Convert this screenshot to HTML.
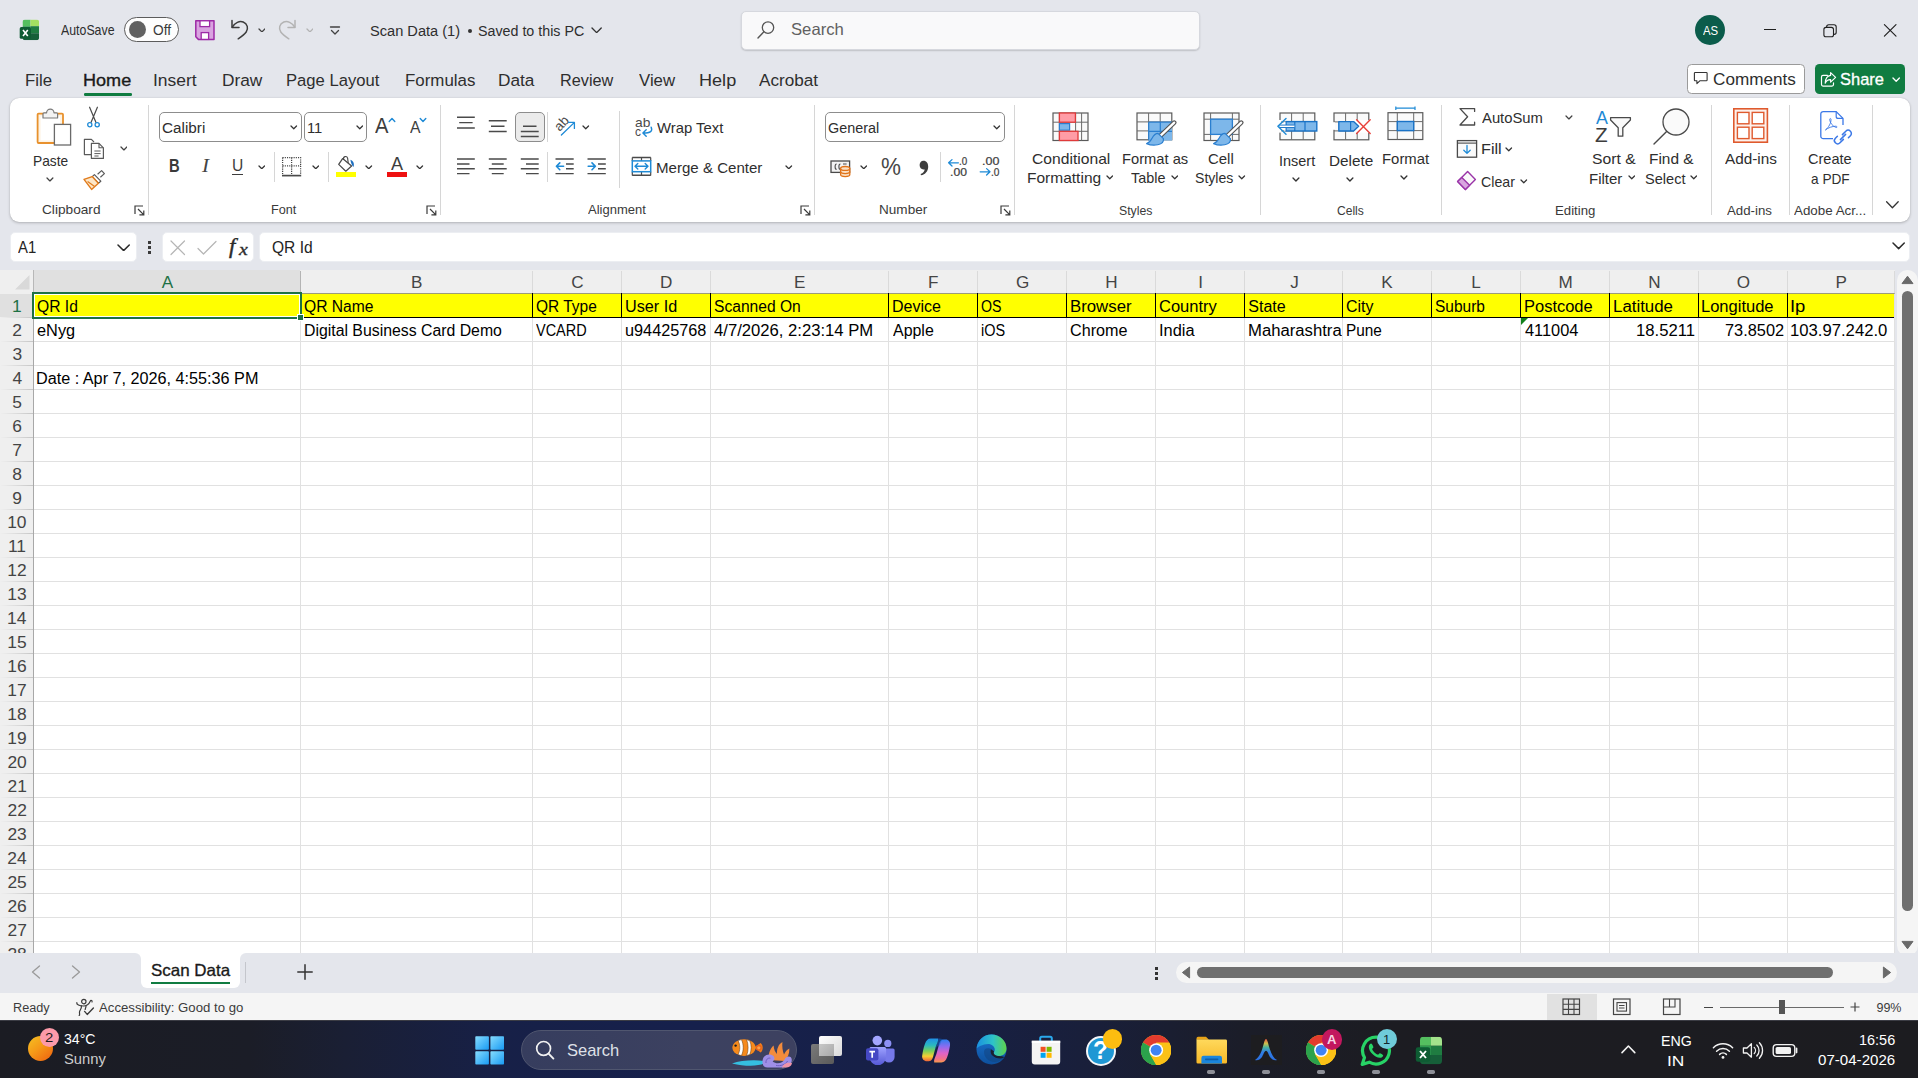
<!DOCTYPE html>
<html><head><meta charset="utf-8"><title>Scan Data (1) - Excel</title>
<style>
html,body{margin:0;padding:0;}
body{width:1918px;height:1078px;overflow:hidden;position:relative;background:#e4e6ec;font-family:"Liberation Sans",sans-serif;}
.b{position:absolute;display:block;box-sizing:border-box;}
.t{position:absolute;display:block;white-space:pre;transform-origin:0 50%;font-family:"Liberation Sans",sans-serif;}
</style></head><body>
<!-- s_title -->
<svg class="b" style="left:19px;top:19px;" width="21" height="22" viewBox="0 0 21 22">
<defs><clipPath id="xlc"><rect x="3.5" y=".6" width="16.6" height="20.6" rx="2.6"/></clipPath></defs>
<g clip-path="url(#xlc)">
<rect x="3.5" y=".6" width="8" height="6.6" fill="#55bf60"/>
<rect x="11.5" y=".6" width="8.6" height="6.6" fill="#a4df62"/>
<rect x="3.5" y="7.2" width="8" height="7" fill="#2f9b50"/>
<rect x="11.5" y="7.2" width="8.6" height="7" fill="#1f7c41"/>
<rect x="3.5" y="14.2" width="16.6" height="7" fill="#165f39"/>
</g>
<rect x=".7" y="8.1" width="11.3" height="11.7" rx="1.6" fill="#0e5c33"/>
<path d="M4 11 L8.8 17 M8.8 11 L4 17" stroke="#fff" stroke-width="1.6"/>
</svg>
<span class="t" style="left:61.00px;top:21.49px;font-size:14.5px;line-height:19px;color:#2e2e2e;transform:scaleX(0.8510);">AutoSave</span>
<div class="b" style="left:123.8px;top:17px;width:55px;height:24.8px;border:1.3px solid #5c5c5c;border-radius:13px;background:#fdfdfd;"></div>
<div class="b" style="left:128.6px;top:21px;width:17.2px;height:17.2px;border-radius:50%;background:#616161;"></div>
<span class="t" style="left:152.88px;top:21.95px;font-size:13.8px;line-height:18px;color:#3a3a3a;transform:scaleX(0.9946);">Off</span>
<svg class="b" style="left:194px;top:19px;" width="22" height="22" viewBox="0 0 22 22">
<path d="M1.8 1.8 H20 V20.4 H4.4 L1.8 17.8Z" fill="#d9a3e0" stroke="#9d2aa6" stroke-width="1.5" stroke-linejoin="round"/>
<rect x="6" y="1.8" width="9.6" height="5.8" fill="#fff" stroke="#9d2aa6" stroke-width="1.3"/>
<rect x="7.2" y="13.6" width="7.4" height="6.8" fill="#fff" stroke="#9d2aa6" stroke-width="1.3"/>
</svg>
<svg class="b" style="left:229px;top:17px;" width="22" height="24" viewBox="0 0 22 24">
<path d="M3 3.5 V10.5 H10" fill="none" stroke="#3b3b3b" stroke-width="1.5" stroke-linecap="round" stroke-linejoin="round"/>
<path d="M3.3 10.2 C6 5.5 10.5 3.6 14.2 5 C18.6 6.7 19.6 11.6 17.2 15 C15.6 17.3 12.6 19.6 9.2 21.8" fill="none" stroke="#3b3b3b" stroke-width="1.5" stroke-linecap="round"/>
</svg>
<svg class="b" style="left:257.56px;top:27.53px;" width="7.88" height="4.94" viewBox="0 0 7.88 4.94"><path d="M1 1 L3.94 3.94 L6.88 1" fill="none" stroke="#424242" stroke-width="1.261" stroke-linecap="round" stroke-linejoin="round"/></svg>
<svg class="b" style="left:276px;top:17px;" width="22" height="24" viewBox="0 0 22 24">
<path d="M19 3.5 V10.5 H12" fill="none" stroke="#b3b3b3" stroke-width="1.5" stroke-linecap="round" stroke-linejoin="round"/>
<path d="M18.7 10.2 C16 5.5 11.5 3.6 7.8 5 C3.4 6.7 2.4 11.6 4.8 15 C6.4 17.3 9.4 19.6 12.8 21.8" fill="none" stroke="#b3b3b3" stroke-width="1.5" stroke-linecap="round"/>
</svg>
<svg class="b" style="left:305.56px;top:27.53px;" width="7.88" height="4.94" viewBox="0 0 7.88 4.94"><path d="M1 1 L3.94 3.94 L6.88 1" fill="none" stroke="#b3b3b3" stroke-width="1.261" stroke-linecap="round" stroke-linejoin="round"/></svg>
<svg class="b" style="left:329px;top:25px;" width="13" height="12" viewBox="0 0 13 12">
<path d="M1.5 2 H10.5" stroke="#424242" stroke-width="1.3" stroke-linecap="round"/>
<path d="M2.5 5.5 L6 9 L9.5 5.5" fill="none" stroke="#424242" stroke-width="1.3" stroke-linecap="round" stroke-linejoin="round"/>
</svg>
<span class="t" style="left:370.34px;top:20.83px;font-size:15.5px;line-height:20px;color:#2e2e2e;transform:scaleX(0.9422);">Scan Data (1)</span>
<div class="b" style="left:467.5px;top:29px;width:4px;height:4px;border-radius:50%;background:#333;"></div>
<span class="t" style="left:478.36px;top:20.83px;font-size:15.5px;line-height:20px;color:#2e2e2e;transform:scaleX(0.9198);">Saved to this PC</span>
<svg class="b" style="left:590.88px;top:26.69px;" width="11.24" height="6.62" viewBox="0 0 11.24 6.62"><path d="M1 1 L5.62 5.62 L10.24 1" fill="none" stroke="#333" stroke-width="1.358" stroke-linecap="round" stroke-linejoin="round"/></svg>
<div class="b" style="left:740.5px;top:11px;width:459px;height:39px;background:#f9f9fa;border:1px solid #d6d8de;border-radius:5px;box-shadow:0 1px 1.5px rgba(0,0,0,.16);"></div>
<svg class="b" style="left:756px;top:20px;" width="20" height="20" viewBox="0 0 20 20">
<circle cx="12" cy="7.6" r="5.7" fill="none" stroke="#555" stroke-width="1.3"/>
<path d="M7.9 11.8 L2 18" stroke="#555" stroke-width="1.4" stroke-linecap="round"/>
</svg>
<span class="t" style="left:791.25px;top:19.18px;font-size:16.5px;line-height:21px;color:#606060;transform:scaleX(1.0101);">Search</span>
<div class="b" style="left:1695px;top:15px;width:30px;height:30px;border-radius:50%;background:#0b5c4b;"></div>
<span class="t" style="left:1702.60px;top:22.07px;font-size:13px;line-height:17px;color:#fff;transform:scaleX(0.8740);">AS</span>
<div class="b" style="left:1764px;top:29.2px;width:12.2px;height:1.15px;background:#1f1f1f;"></div>
<svg class="b" style="left:1822px;top:22.5px;" width="16" height="16" viewBox="0 0 16 16">
<rect x="1.9" y="4.4" width="9.6" height="9.4" rx="2.1" fill="none" stroke="#1f1f1f" stroke-width="1.1"/>
<path d="M4.6 4.2 V4 a2.2 2.2 0 0 1 2.2 -2.2 H12 a2.2 2.2 0 0 1 2.2 2.2 V9.2 a2.2 2.2 0 0 1 -2.2 2.2 H11.7" fill="none" stroke="#1f1f1f" stroke-width="1.1"/>
</svg>
<svg class="b" style="left:1882px;top:22px;" width="17" height="17" viewBox="0 0 17 17"><path d="M2.4 2.6 L14 14.2 M14 2.6 L2.4 14.2" stroke="#1f1f1f" stroke-width="1.15" stroke-linecap="round"/></svg>
<span class="t" style="left:24.66px;top:68.99px;font-size:17.4px;line-height:23px;color:#2e2e2e;transform:scaleX(0.9643);">File</span>
<span class="t" style="left:153.43px;top:68.99px;font-size:17.4px;line-height:23px;color:#2e2e2e;transform:scaleX(1.0037);">Insert</span>
<span class="t" style="left:221.62px;top:68.99px;font-size:17.4px;line-height:23px;color:#2e2e2e;transform:scaleX(0.9940);">Draw</span>
<span class="t" style="left:285.67px;top:68.99px;font-size:17.4px;line-height:23px;color:#2e2e2e;transform:scaleX(0.9561);">Page Layout</span>
<span class="t" style="left:404.65px;top:68.99px;font-size:17.4px;line-height:23px;color:#2e2e2e;transform:scaleX(0.9708);">Formulas</span>
<span class="t" style="left:497.62px;top:68.99px;font-size:17.4px;line-height:23px;color:#2e2e2e;transform:scaleX(0.9909);">Data</span>
<span class="t" style="left:559.70px;top:68.99px;font-size:17.4px;line-height:23px;color:#2e2e2e;transform:scaleX(0.9339);">Review</span>
<span class="t" style="left:638.92px;top:68.99px;font-size:17.4px;line-height:23px;color:#2e2e2e;transform:scaleX(0.9646);">View</span>
<span class="t" style="left:698.55px;top:68.99px;font-size:17.4px;line-height:23px;color:#2e2e2e;transform:scaleX(1.0395);">Help</span>
<span class="t" style="left:759.00px;top:68.99px;font-size:17.4px;line-height:23px;color:#2e2e2e;transform:scaleX(0.9857);">Acrobat</span>
<span class="t" style="left:83.05px;top:68.99px;font-size:17.4px;line-height:23px;color:#1a1a1a;-webkit-text-stroke:0.35px #1a1a1a;transform:scaleX(1.0388);">Home</span>
<div class="b" style="left:84px;top:93px;width:48px;height:2.6px;background:#107c41;border-radius:1.3px;"></div>
<div class="b" style="left:1687px;top:64px;width:117.5px;height:30px;background:#fff;border:1px solid #9a9a9a;border-radius:4.5px;"></div>
<svg class="b" style="left:1693px;top:70px;" width="16" height="16" viewBox="0 0 16 16">
<path d="M2.2 2.5 H13.3 a.8 .8 0 0 1 .8 .8 V10 a.8 .8 0 0 1 -.8 .8 H6.8 L3.9 13.6 V10.8 H2.2 a.8 .8 0 0 1 -.8 -.8 V3.3 a.8 .8 0 0 1 .8 -.8Z" fill="none" stroke="#333" stroke-width="1.1" stroke-linejoin="round"/>
</svg>
<span class="t" style="left:1713.14px;top:68.78px;font-size:16.8px;line-height:22px;color:#2e2e2e;transform:scaleX(1.0213);">Comments</span>
<div class="b" style="left:1815px;top:64px;width:90px;height:30px;background:#107c41;border-radius:4.5px;"></div>
<svg class="b" style="left:1820px;top:69.5px;" width="18" height="18" viewBox="0 0 18 18">
<path d="M7.4 5.4 H3 a1.5 1.5 0 0 0 -1.5 1.5 V14.6 a1.5 1.5 0 0 0 1.5 1.5 H12 a1.5 1.5 0 0 0 1.5 -1.5 V12.8" fill="none" stroke="#fff" stroke-width="1.2" stroke-linecap="round"/>
<path d="M10.6 2.6 L15.6 7.4 L10.6 12.2 V9.6 C8 9.5 6.3 10.8 5.2 13.2 C5.4 8.8 7.4 5.8 10.6 5.4Z" fill="none" stroke="#fff" stroke-width="1.15" stroke-linejoin="round"/>
</svg>
<span class="t" style="left:1840.26px;top:67.92px;font-size:17.2px;line-height:22px;color:#fff;-webkit-text-stroke:0.34px #fff;transform:scaleX(0.9577);">Share</span>
<svg class="b" style="left:1891.81px;top:76.904px;" width="8.384" height="5.192" viewBox="0 0 8.384 5.192"><path d="M1 1 L4.192 4.192 L7.384 1" fill="none" stroke="#fff" stroke-width="1.358" stroke-linecap="round" stroke-linejoin="round"/></svg>
<!-- s_ribbon -->
<div class="b" style="left:10px;top:98px;width:1899.5px;height:123.5px;background:#fff;border-radius:9px;box-shadow:0 1px 3px rgba(0,0,0,.22),0 0 1px rgba(0,0,0,.18);"></div>
<div class="b" style="left:147.5px;top:104.5px;width:1px;height:110px;background:#d6d6d6;"></div>
<div class="b" style="left:439.8px;top:104.5px;width:1px;height:110px;background:#d6d6d6;"></div>
<div class="b" style="left:813.7px;top:104.5px;width:1px;height:110px;background:#d6d6d6;"></div>
<div class="b" style="left:1014px;top:104.5px;width:1px;height:110px;background:#d6d6d6;"></div>
<div class="b" style="left:1260px;top:104.5px;width:1px;height:110px;background:#d6d6d6;"></div>
<div class="b" style="left:1440.8px;top:104.5px;width:1px;height:110px;background:#d6d6d6;"></div>
<div class="b" style="left:1710.8px;top:104.5px;width:1px;height:110px;background:#d6d6d6;"></div>
<div class="b" style="left:1789px;top:104.5px;width:1px;height:110px;background:#d6d6d6;"></div>
<div class="b" style="left:1872px;top:104.5px;width:1px;height:110px;background:#d6d6d6;"></div>
<div class="b" style="left:273.5px;top:152px;width:1px;height:30px;background:#d6d6d6;"></div>
<div class="b" style="left:328px;top:152px;width:1px;height:30px;background:#d6d6d6;"></div>
<div class="b" style="left:547px;top:112px;width:1px;height:29.5px;background:#d6d6d6;"></div>
<div class="b" style="left:547px;top:152px;width:1px;height:30px;background:#d6d6d6;"></div>
<div class="b" style="left:619px;top:111px;width:1px;height:77px;background:#d6d6d6;"></div>
<div class="b" style="left:939.5px;top:152px;width:1px;height:30px;background:#d6d6d6;"></div>
<span class="t" style="left:41.62px;top:200.68px;font-size:13.6px;line-height:18px;color:#3a3a3a;transform:scaleX(1.0051);">Clipboard</span>
<span class="t" style="left:270.68px;top:200.68px;font-size:13.6px;line-height:18px;color:#3a3a3a;transform:scaleX(0.9330);">Font</span>
<span class="t" style="left:588.00px;top:200.68px;font-size:13.6px;line-height:18px;color:#3a3a3a;transform:scaleX(0.9572);">Alignment</span>
<span class="t" style="left:879.21px;top:200.68px;font-size:13.6px;line-height:18px;color:#3a3a3a;transform:scaleX(0.9974);">Number</span>
<span class="t" style="left:1119.45px;top:201.68px;font-size:13.6px;line-height:18px;color:#3a3a3a;transform:scaleX(0.9035);">Styles</span>
<span class="t" style="left:1336.90px;top:201.68px;font-size:13.6px;line-height:18px;color:#3a3a3a;transform:scaleX(0.8865);">Cells</span>
<span class="t" style="left:1555.44px;top:201.68px;font-size:13.6px;line-height:18px;color:#3a3a3a;transform:scaleX(0.9711);">Editing</span>
<span class="t" style="left:1727.00px;top:201.98px;font-size:13.6px;line-height:18px;color:#3a3a3a;transform:scaleX(0.9753);">Add-ins</span>
<span class="t" style="left:1794.00px;top:201.98px;font-size:13.6px;line-height:18px;color:#3a3a3a;transform:scaleX(0.9841);">Adobe Acr...</span>
<svg class="b" style="left:133.5px;top:204.5px;" width="11" height="11" viewBox="0 0 11 11">
<path d="M1 9 V1 H9" fill="none" stroke="#3a3a3a" stroke-width="1.2"/>
<path d="M4 4 L9.6 9.6 M9.8 5.4 V9.8 H5.4" fill="none" stroke="#3a3a3a" stroke-width="1.2"/>
</svg>
<svg class="b" style="left:425.5px;top:204.5px;" width="11" height="11" viewBox="0 0 11 11">
<path d="M1 9 V1 H9" fill="none" stroke="#3a3a3a" stroke-width="1.2"/>
<path d="M4 4 L9.6 9.6 M9.8 5.4 V9.8 H5.4" fill="none" stroke="#3a3a3a" stroke-width="1.2"/>
</svg>
<svg class="b" style="left:799.5px;top:204.5px;" width="11" height="11" viewBox="0 0 11 11">
<path d="M1 9 V1 H9" fill="none" stroke="#3a3a3a" stroke-width="1.2"/>
<path d="M4 4 L9.6 9.6 M9.8 5.4 V9.8 H5.4" fill="none" stroke="#3a3a3a" stroke-width="1.2"/>
</svg>
<svg class="b" style="left:1000px;top:204.5px;" width="11" height="11" viewBox="0 0 11 11">
<path d="M1 9 V1 H9" fill="none" stroke="#3a3a3a" stroke-width="1.2"/>
<path d="M4 4 L9.6 9.6 M9.8 5.4 V9.8 H5.4" fill="none" stroke="#3a3a3a" stroke-width="1.2"/>
</svg>
<svg class="b" style="left:1884.5px;top:200px;" width="15" height="10" viewBox="0 0 15 10"><path d="M1.6 1.8 L7.4 7.8 L13.2 1.8" fill="none" stroke="#333" stroke-width="1.3" stroke-linecap="round" stroke-linejoin="round"/></svg>
<svg class="b" style="left:35px;top:106px;" width="38" height="41" viewBox="0 0 38 41">
<rect x="2.6" y="7.6" width="25.4" height="29.4" rx="1" fill="#fdf3e4" stroke="#e8912d" stroke-width="1.8"/>
<rect x="5.6" y="10.4" width="19.4" height="24" fill="#fff"/>
<path d="M8 12 V7.8 a1 1 0 0 1 1 -1 H11.6 a3.7 3.7 0 0 1 7.4 0 H21.6 a1 1 0 0 1 1 1 V12Z" fill="#f3f3f3" stroke="#7a7a7a" stroke-width="1.2" stroke-linejoin="round"/>
<rect x="19.4" y="18.4" width="16.2" height="20.6" fill="#fff" stroke="#6a6a6a" stroke-width="1.3"/>
</svg>
<span class="t" style="left:33.40px;top:152.02px;font-size:14.6px;line-height:19px;color:#2e2e2e;transform:scaleX(0.9423);">Paste</span>
<svg class="b" style="left:46.06px;top:176.83px;" width="7.88" height="4.94" viewBox="0 0 7.88 4.94"><path d="M1 1 L3.94 3.94 L6.88 1" fill="none" stroke="#424242" stroke-width="1.261" stroke-linecap="round" stroke-linejoin="round"/></svg>
<svg class="b" style="left:85px;top:105px;" width="17" height="24" viewBox="0 0 17 24">
<path d="M4.6 2.2 L11 17.6 M12.4 2.2 L6 17.6" stroke="#4a4a4a" stroke-width="1.2" stroke-linecap="round"/>
<circle cx="4.8" cy="19.8" r="2.1" fill="#fff" stroke="#1e8ad6" stroke-width="1.3"/>
<circle cx="12.2" cy="19.8" r="2.1" fill="#fff" stroke="#1e8ad6" stroke-width="1.3"/>
</svg>
<svg class="b" style="left:82px;top:137px;" width="24" height="23" viewBox="0 0 24 23">
<path d="M9 17.6 H2.4 V2.4 H9.4 L12 5" fill="none" stroke="#5a5a5a" stroke-width="1.2" stroke-linejoin="round"/>
<path d="M9.4 6.4 H17 L21.4 10.8 V21.4 H9.4Z" fill="#fff" stroke="#5a5a5a" stroke-width="1.2" stroke-linejoin="round"/>
<path d="M17 6.4 V10.8 H21.4" fill="none" stroke="#5a5a5a" stroke-width="1.1"/>
<path d="M12.4 14 H18.6 M12.4 16.6 H18.6 M12.4 19 H16.6" stroke="#5a5a5a" stroke-width="1"/>
</svg>
<svg class="b" style="left:119.56px;top:146.23px;" width="7.88" height="4.94" viewBox="0 0 7.88 4.94"><path d="M1 1 L3.94 3.94 L6.88 1" fill="none" stroke="#424242" stroke-width="1.261" stroke-linecap="round" stroke-linejoin="round"/></svg>
<svg class="b" style="left:82px;top:169px;" width="24" height="22" viewBox="0 0 24 22">
<path d="M15.6 5.2 L19.6 1.6 L22.4 4.6 L18.4 8.2" fill="#fff" stroke="#5a5a5a" stroke-width="1.2" stroke-linejoin="round"/>
<path d="M12.4 5.6 L18.8 12.2 L16.4 14.2 L10.2 7.6Z" fill="#fff" stroke="#5a5a5a" stroke-width="1.2" stroke-linejoin="round"/>
<path d="M10.2 7.6 L16.4 14.2 L9.6 20.4 L2 10.4Z" fill="#fde7c8" stroke="#e07b1c" stroke-width="1.4" stroke-linejoin="round"/>
<path d="M5.6 12.6 L12.6 17.4" stroke="#e07b1c" stroke-width="1.2"/>
</svg>
<div class="b" style="left:159px;top:112px;width:143px;height:30px;background:#fff;border:1px solid #8d8d8d;border-radius:5px;"></div>
<span class="t" style="left:161.74px;top:117.73px;font-size:15.2px;line-height:20px;color:#2e2e2e;transform:scaleX(1.0056);">Calibri</span>
<svg class="b" style="left:290.028px;top:124.914px;" width="7.544" height="4.772" viewBox="0 0 7.544 4.772"><path d="M1 1 L3.772 3.772 L6.544 1" fill="none" stroke="#333" stroke-width="1.261" stroke-linecap="round" stroke-linejoin="round"/></svg>
<div class="b" style="left:304px;top:112px;width:63px;height:30px;background:#fff;border:1px solid #8d8d8d;border-radius:5px;"></div>
<span class="t" style="left:306.89px;top:117.73px;font-size:15.2px;line-height:20px;color:#2e2e2e;transform:scaleX(0.9707);">11</span>
<svg class="b" style="left:355.728px;top:124.914px;" width="7.544" height="4.772" viewBox="0 0 7.544 4.772"><path d="M1 1 L3.772 3.772 L6.544 1" fill="none" stroke="#333" stroke-width="1.261" stroke-linecap="round" stroke-linejoin="round"/></svg>
<span class="t" style="left:375.30px;top:111.56px;font-size:21.4px;line-height:28px;color:#3d3d3d;transform:scaleX(0.9416);">A</span>
<svg class="b" style="left:387.5px;top:117.3px;" width="8" height="6" viewBox="0 0 8 6"><path d="M1.2 4.4 L4 1.4 L6.8 4.4" fill="none" stroke="#1e8ad6" stroke-width="1.4" stroke-linecap="round" stroke-linejoin="round"/></svg>
<span class="t" style="left:409.50px;top:116.58px;font-size:16.8px;line-height:22px;color:#3d3d3d;transform:scaleX(0.9398);">A</span>
<svg class="b" style="left:418.7px;top:117.3px;" width="8" height="6" viewBox="0 0 8 6"><path d="M1.2 1.4 L4 4.4 L6.8 1.4" fill="none" stroke="#1e8ad6" stroke-width="1.4" stroke-linecap="round" stroke-linejoin="round"/></svg>
<span class="t" style="left:168.84px;top:154.82px;font-size:17.8px;line-height:23px;color:#3a3a3a;font-weight:700;transform:scaleX(0.8313);">B</span>
<span class="t" style="left:202.01px;top:153.83px;font-size:18.4px;line-height:24px;color:#444;font-family:'Liberation Serif',serif;font-style:italic;transform:scaleX(1.1442);">I</span>
<span class="t" style="left:231.63px;top:155.24px;font-size:16.4px;line-height:21px;color:#3d3d3d;transform:scaleX(0.9521);">U</span>
<div class="b" style="left:232px;top:173.9px;width:11px;height:1.3px;background:#3d3d3d;"></div>
<svg class="b" style="left:257.728px;top:164.614px;" width="7.544" height="4.772" viewBox="0 0 7.544 4.772"><path d="M1 1 L3.772 3.772 L6.544 1" fill="none" stroke="#333" stroke-width="1.261" stroke-linecap="round" stroke-linejoin="round"/></svg>
<svg class="b" style="left:281px;top:156px;" width="22" height="22" viewBox="0 0 22 22">
<path d="M1.6 1.6 H19.6 V18 M1.6 1.6 V18 M10.6 1.6 V18 M1.6 9.8 H19.6" fill="none" stroke="#444" stroke-width="1.25" stroke-dasharray="1.1 1.1"/>
<path d="M1 19.6 H20.2" stroke="#4a4a4a" stroke-width="1.7"/>
</svg>
<svg class="b" style="left:311.728px;top:164.614px;" width="7.544" height="4.772" viewBox="0 0 7.544 4.772"><path d="M1 1 L3.772 3.772 L6.544 1" fill="none" stroke="#333" stroke-width="1.261" stroke-linecap="round" stroke-linejoin="round"/></svg>
<svg class="b" style="left:336px;top:155px;" width="21" height="17.5" viewBox="0 0 21 17.5">
<path d="M6.6 3.6 L15.6 11 L9.8 16.2 L2.7 9.4Z" fill="#fff" stroke="#4a4a4a" stroke-width="1.25" stroke-linejoin="round"/>
<path d="M7.6 4.4 C6.8 1.4 10.8 .4 11.6 3.2 L12.2 7.8" fill="none" stroke="#4a4a4a" stroke-width="1.15" stroke-linecap="round"/>
<path d="M14.4 4.8 C17.6 6 18.6 9.4 17.4 12 C16 10.6 14.8 8 14.4 4.8Z" fill="#1e6fc0"/>
</svg>
<div class="b" style="left:335.8px;top:172px;width:20px;height:4.8px;background:#ffff00;"></div>
<svg class="b" style="left:365.228px;top:164.614px;" width="7.544" height="4.772" viewBox="0 0 7.544 4.772"><path d="M1 1 L3.772 3.772 L6.544 1" fill="none" stroke="#333" stroke-width="1.261" stroke-linecap="round" stroke-linejoin="round"/></svg>
<span class="t" style="left:390.80px;top:153.05px;font-size:17.6px;line-height:23px;color:#3d3d3d;transform:scaleX(1.0253);">A</span>
<div class="b" style="left:386.8px;top:172px;width:20.2px;height:4.8px;background:#ee1111;"></div>
<svg class="b" style="left:416.228px;top:164.614px;" width="7.544" height="4.772" viewBox="0 0 7.544 4.772"><path d="M1 1 L3.772 3.772 L6.544 1" fill="none" stroke="#333" stroke-width="1.261" stroke-linecap="round" stroke-linejoin="round"/></svg>
<div class="b" style="left:515px;top:112px;width:29.5px;height:29.7px;background:#ebebeb;border:1px solid #8d8d8d;border-radius:5px;"></div>
<svg class="b" style="left:450px;top:100px;" width="170" height="90" viewBox="0 0 170 90"><path d="M7 17.3 H24.8 M9.2 22.6 H22.6 M7 28 H24.8 " stroke="#4a4a4a" stroke-width="1.45" fill="none"/><path d="M38.8 20.8 H56.7 M41 26.2 H54.5 M38.8 31.4 H56.7 " stroke="#4a4a4a" stroke-width="1.45" fill="none"/><path d="M73 26.2 H86.5 M70.8 31.4 H88.7 M70.8 36.4 H88.7 " stroke="#4a4a4a" stroke-width="1.45" fill="none"/><path d="M7 59 H24.8 M7 63.9 H19.5 M7 68.7 H24.8 M7 73.6 H19.5 " stroke="#4a4a4a" stroke-width="1.45" fill="none"/><path d="M38.8 59 H56.7 M41.8 63.9 H53.7 M38.8 68.7 H56.7 M41.8 73.6 H53.7 " stroke="#4a4a4a" stroke-width="1.45" fill="none"/><path d="M70.8 59 H88.7 M76 63.9 H88.7 M70.8 68.7 H88.7 M76 73.6 H88.7 " stroke="#4a4a4a" stroke-width="1.45" fill="none"/><path d="M105.5 59 H123.7 M116 63.9 H123.7 M116 68.7 H123.7 M105.5 73.6 H123.7 " stroke="#4a4a4a" stroke-width="1.45" fill="none"/><path d="M113.6 66.3 H106.6 M109.8 62.9 L106.4 66.3 L109.8 69.7" fill="none" stroke="#1e8ad6" stroke-width="1.6" stroke-linecap="round" stroke-linejoin="round"/><path d="M137.5 59 H155.8 M148 63.9 H155.8 M148 68.7 H155.8 M137.5 73.6 H155.8 " stroke="#4a4a4a" stroke-width="1.45" fill="none"/><path d="M138.2 66.3 H145.2 M142 62.9 L145.4 66.3 L142 69.7" fill="none" stroke="#1e8ad6" stroke-width="1.6" stroke-linecap="round" stroke-linejoin="round"/></svg>
<span class="t" style="left:553.6px;top:116px;font-size:13.4px;line-height:15px;color:#4a4a4a;transform:rotate(-47deg);transform-origin:50% 50%;">ab</span>
<svg class="b" style="left:559px;top:120px;" width="18" height="17" viewBox="0 0 18 17"><path d="M2.4 15 L15.2 2.6 M9.4 2.4 H15.4 V8.4" fill="none" stroke="#1e8ad6" stroke-width="1.3" stroke-linecap="round" stroke-linejoin="round"/></svg>
<svg class="b" style="left:582.228px;top:124.914px;" width="7.544" height="4.772" viewBox="0 0 7.544 4.772"><path d="M1 1 L3.772 3.772 L6.544 1" fill="none" stroke="#333" stroke-width="1.261" stroke-linecap="round" stroke-linejoin="round"/></svg>
<span class="t" style="left:634.65px;top:113.60px;font-size:12.8px;line-height:17px;color:#4a4a4a;transform:scaleX(1.0771);">ab</span>
<span class="t" style="left:634.72px;top:123.20px;font-size:12.8px;line-height:17px;color:#4a4a4a;transform:scaleX(0.9339);">c</span>
<svg class="b" style="left:641px;top:126px;" width="13" height="12" viewBox="0 0 13 12"><path d="M10.2 1.2 C11.8 5.2 9.6 7 2.2 7 M5.2 3.8 L1.9 7 L5.2 10.2" fill="none" stroke="#1e8ad6" stroke-width="1.45" stroke-linecap="round" stroke-linejoin="round"/></svg>
<span class="t" style="left:657.43px;top:118.52px;font-size:14.6px;line-height:19px;color:#2e2e2e;transform:scaleX(1.0189);">Wrap Text</span>
<svg class="b" style="left:631px;top:156px;" width="21" height="21" viewBox="0 0 21 21">
<path d="M1.2 1.5 H19.8 M1.2 19.3 H19.8" stroke="#4a4a4a" stroke-width="1.5"/>
<path d="M1.3 1.4 V5 M10.5 1.4 V5 M19.7 1.4 V5 M1.3 15.8 V19.4 M10.5 15.8 V19.4 M19.7 15.8 V19.4" stroke="#4a4a4a" stroke-width="1.2"/>
<rect x="1.3" y="4.9" width="18.4" height="10.8" fill="#fff" stroke="#1e8ad6" stroke-width="1.5"/>
<path d="M4.2 10.3 H16.8 M6.8 7.6 L4 10.3 L6.8 13 M14.2 7.6 L17 10.3 L14.2 13" fill="none" stroke="#1e8ad6" stroke-width="1.4" stroke-linecap="round" stroke-linejoin="round"/>
</svg>
<span class="t" style="left:656.29px;top:158.52px;font-size:14.6px;line-height:19px;color:#2e2e2e;transform:scaleX(1.0326);">Merge &amp; Center</span>
<svg class="b" style="left:785.228px;top:164.614px;" width="7.544" height="4.772" viewBox="0 0 7.544 4.772"><path d="M1 1 L3.772 3.772 L6.544 1" fill="none" stroke="#333" stroke-width="1.261" stroke-linecap="round" stroke-linejoin="round"/></svg>
<div class="b" style="left:825px;top:112px;width:180px;height:30px;background:#fff;border:1px solid #8d8d8d;border-radius:5px;"></div>
<span class="t" style="left:827.78px;top:117.73px;font-size:15.2px;line-height:20px;color:#2e2e2e;transform:scaleX(0.9467);">General</span>
<svg class="b" style="left:993.228px;top:124.914px;" width="7.544" height="4.772" viewBox="0 0 7.544 4.772"><path d="M1 1 L3.772 3.772 L6.544 1" fill="none" stroke="#333" stroke-width="1.261" stroke-linecap="round" stroke-linejoin="round"/></svg>
<svg class="b" style="left:829.6px;top:159.7px;" width="23" height="18" viewBox="0 0 23 18">
<rect x="1" y="1" width="18.6" height="11.4" fill="#f3f3f3" stroke="#4a4a4a" stroke-width="1.3"/>
<path d="M6.6 4 C4.6 4 4.6 9.4 6.6 9.4 M10.4 4 C8.4 4 8.4 9.4 10.4 9.4 M13 4 H16.6" fill="none" stroke="#4a4a4a" stroke-width="1.1"/>
<g transform="translate(-.8,-.2)"><path d="M11.4 8.6 V14.8 C11.4 17.6 20.6 17.6 20.6 14.8 V8.6" fill="#fbe0c4" stroke="#e0731a" stroke-width="1.3"/>
<ellipse cx="16" cy="8.6" rx="4.6" ry="1.9" fill="#fbe0c4" stroke="#e0731a" stroke-width="1.3"/>
<path d="M11.4 11.8 C11.4 14.4 20.6 14.4 20.6 11.8" fill="none" stroke="#e0731a" stroke-width="1.2"/></g>
</svg>
<svg class="b" style="left:859.528px;top:164.614px;" width="7.544" height="4.772" viewBox="0 0 7.544 4.772"><path d="M1 1 L3.772 3.772 L6.544 1" fill="none" stroke="#333" stroke-width="1.261" stroke-linecap="round" stroke-linejoin="round"/></svg>
<span class="t" style="left:881.11px;top:151.91px;font-size:23px;line-height:30px;color:#484848;transform:scaleX(0.9756);">%</span>
<svg class="b" style="left:917.9px;top:158.6px;" width="12" height="18.4" viewBox="0 0 12 18.4"><path transform="scale(1,1.09)" d="M5.4 1.6 C8.6 1.6 10.2 4 10.2 7 C10.2 11 7.4 14 3 15 L2.6 13.8 C5.2 13 6.6 11.2 6.6 9.4 C6.4 9.5 5.9 9.6 5.4 9.6 C3.2 9.6 1.6 8 1.6 5.6 C1.6 3.4 3.2 1.6 5.4 1.6Z" fill="#3d3d3d"/></svg>
<svg class="b" style="left:947px;top:156px;" width="21" height="21" viewBox="0 0 21 21"><path d="M11.4 6.8 H1.6 M5 3.6 L1.6 6.8 L5 10" fill="none" stroke="#1e8ad6" stroke-width="1.3" stroke-linecap="round" stroke-linejoin="round"/></svg>
<span class="t" style="left:958.81px;top:154.15px;font-size:11.2px;line-height:15px;color:#3d3d3d;-webkit-text-stroke:0.22px #3d3d3d;transform:scaleX(0.8803);">.0</span>
<span class="t" style="left:950.20px;top:164.65px;font-size:11.2px;line-height:15px;color:#3d3d3d;-webkit-text-stroke:0.22px #3d3d3d;transform:scaleX(1.0870);">.00</span>
<span class="t" style="left:981.88px;top:154.15px;font-size:11.2px;line-height:15px;color:#3d3d3d;-webkit-text-stroke:0.22px #3d3d3d;transform:scaleX(1.1152);">.00</span>
<svg class="b" style="left:979px;top:164.5px;" width="13" height="13" viewBox="0 0 13 13"><path d="M1.2 6.8 H11 M7.6 3.6 L11 6.8 L7.6 10" fill="none" stroke="#1e8ad6" stroke-width="1.3" stroke-linecap="round" stroke-linejoin="round"/></svg>
<span class="t" style="left:990.69px;top:164.65px;font-size:11.2px;line-height:15px;color:#3d3d3d;-webkit-text-stroke:0.22px #3d3d3d;transform:scaleX(0.9054);">.0</span>
<svg class="b" style="left:1052.3px;top:111.6px;" width="37" height="30" viewBox="0 0 37 30"><rect x="1" y="1" width="35" height="27.5" fill="#fafafa" stroke="#5a5a5a" stroke-width="1.2"/><path d="M7.4 1 V28.5 M23.6 1 V28.5 M29.6 1 V28.5 M1 10.2 H36 M1 19.3 H36 " stroke="#6a6a6a" stroke-width="1" fill="none"/>
<rect x="7.4" y="1" width="16" height="9.2" fill="#ff9ca6" stroke="#e03a3a" stroke-width="1.3"/>
<rect x="7.4" y="11.6" width="10.2" height="6.6" fill="#7db7ea" stroke="#2a7fd0" stroke-width="1.2"/>
<rect x="7.4" y="19.3" width="18.6" height="9.2" fill="#ff9ca6" stroke="#e03a3a" stroke-width="1.3"/>
</svg>
<span class="t" style="left:1032.22px;top:149.72px;font-size:14.6px;line-height:19px;color:#2e2e2e;transform:scaleX(1.0726);">Conditional</span>
<span class="t" style="left:1027.06px;top:169.32px;font-size:14.6px;line-height:19px;color:#2e2e2e;transform:scaleX(1.0628);">Formatting</span>
<svg class="b" style="left:1105.93px;top:175.214px;" width="7.544" height="4.772" viewBox="0 0 7.544 4.772"><path d="M1 1 L3.772 3.772 L6.544 1" fill="none" stroke="#333" stroke-width="1.261" stroke-linecap="round" stroke-linejoin="round"/></svg>
<svg class="b" style="left:1136px;top:111.6px;" width="41" height="36" viewBox="0 0 41 36"><rect x="1" y="1" width="34.8" height="26.8" fill="#fafafa" stroke="#5a5a5a" stroke-width="1.2"/><path d="M12.6 1 V27.8 M24.2 1 V27.8 M1 9.9 H35.8 M1 18.9 H35.8 " stroke="#6a6a6a" stroke-width="1" fill="none"/>
<rect x="12.7" y="10.2" width="23.3" height="18.3" fill="#7db7ea"/>
<path d="M24.3 10.2 V28.5 M12.7 19.3 H36 M12.7 10.2 H36 M12.7 10.2 V28.5" stroke="#2a7fd0" stroke-width="1.2" fill="none"/>

<path d="M38.2 10.6 L24.6 23.6" stroke="#555" stroke-width="4.6" stroke-linecap="round"/>
<path d="M38.2 10.6 L24.6 23.6" stroke="#fff" stroke-width="2.3" stroke-linecap="round"/>
<path d="M22 21.4 C15.4 21.6 17 29.6 10.6 31.6 C17 34.6 28.4 33.4 27.4 26.6Z" fill="#7db7ea" stroke="#2a7fd0" stroke-width="1.2" stroke-linejoin="round"/>
</svg>
<span class="t" style="left:1122.12px;top:149.72px;font-size:14.6px;line-height:19px;color:#2e2e2e;transform:scaleX(1.0075);">Format as</span>
<span class="t" style="left:1131.41px;top:169.32px;font-size:14.6px;line-height:19px;color:#2e2e2e;transform:scaleX(0.9877);">Table</span>
<svg class="b" style="left:1170.73px;top:175.214px;" width="7.544" height="4.772" viewBox="0 0 7.544 4.772"><path d="M1 1 L3.772 3.772 L6.544 1" fill="none" stroke="#333" stroke-width="1.261" stroke-linecap="round" stroke-linejoin="round"/></svg>
<svg class="b" style="left:1203px;top:111.6px;" width="41" height="36" viewBox="0 0 41 36"><rect x="1" y="1" width="35" height="27.5" fill="#fafafa" stroke="#5a5a5a" stroke-width="1.2"/><path d="M7.6 1 V28.5 M29.4 1 V28.5 M1 7.2 H36 M1 22.4 H36 " stroke="#6a6a6a" stroke-width="1" fill="none"/>
<rect x="7.6" y="7.2" width="21.8" height="15.2" fill="#7db7ea" stroke="#2a7fd0" stroke-width="1.3"/>

<path d="M38.2 10.6 L24.6 23.6" stroke="#555" stroke-width="4.6" stroke-linecap="round"/>
<path d="M38.2 10.6 L24.6 23.6" stroke="#fff" stroke-width="2.3" stroke-linecap="round"/>
<path d="M22 21.4 C15.4 21.6 17 29.6 10.6 31.6 C17 34.6 28.4 33.4 27.4 26.6Z" fill="#7db7ea" stroke="#2a7fd0" stroke-width="1.2" stroke-linejoin="round"/>
</svg>
<span class="t" style="left:1208.05px;top:149.72px;font-size:14.6px;line-height:19px;color:#2e2e2e;transform:scaleX(1.0242);">Cell</span>
<span class="t" style="left:1195.37px;top:169.32px;font-size:14.6px;line-height:19px;color:#2e2e2e;transform:scaleX(0.9659);">Styles</span>
<svg class="b" style="left:1238.23px;top:175.214px;" width="7.544" height="4.772" viewBox="0 0 7.544 4.772"><path d="M1 1 L3.772 3.772 L6.544 1" fill="none" stroke="#333" stroke-width="1.261" stroke-linecap="round" stroke-linejoin="round"/></svg>
<svg class="b" style="left:1277px;top:111.6px;" width="42" height="30" viewBox="0 0 42 30"><g transform="translate(2,0)"><rect x="1" y="1" width="34.8" height="26.8" fill="#fafafa" stroke="#5a5a5a" stroke-width="1.2"/><path d="M12.6 1 V27.8 M24.2 1 V27.8 M1 9.9 H35.8 M1 18.9 H35.8 " stroke="#6a6a6a" stroke-width="1" fill="none"/></g>
<rect x="1" y="8" width="3.2" height="12.6" fill="#fff"/>
<rect x="9" y="9.6" width="30.8" height="9.4" fill="#7db7ea" stroke="#1a73c7" stroke-width="1.4"/>
<path d="M17.8 9.6 V19 M28 9.6 V19" stroke="#1a73c7" stroke-width="1.2"/>
<path d="M8.4 9.4 L1.2 14.3 L8.4 19.2 Z" fill="#fff"/>
<path d="M17 14.3 H2.4" stroke="#1a73c7" stroke-width="3.4"/>
<path d="M17.4 14.3 H2.6" stroke="#fff" stroke-width="1.5"/>
<path d="M9 6.4 L.9 14.3 L9 22.2" fill="none" stroke="#1e8ad6" stroke-width="1.4" stroke-linecap="round" stroke-linejoin="round"/>
</svg>
<span class="t" style="left:1279.00px;top:151.82px;font-size:14.6px;line-height:19px;color:#2e2e2e;transform:scaleX(0.9911);">Insert</span>
<svg class="b" style="left:1292.36px;top:176.83px;" width="7.88" height="4.94" viewBox="0 0 7.88 4.94"><path d="M1 1 L3.94 3.94 L6.88 1" fill="none" stroke="#333" stroke-width="1.358" stroke-linecap="round" stroke-linejoin="round"/></svg>
<svg class="b" style="left:1332.6px;top:111.6px;" width="40" height="30" viewBox="0 0 40 30"><rect x="1" y="1" width="34.8" height="26.8" fill="#fafafa" stroke="#5a5a5a" stroke-width="1.2"/><path d="M12.6 1 V27.8 M24.2 1 V27.8 M1 9.9 H35.8 M1 18.9 H35.8 " stroke="#6a6a6a" stroke-width="1" fill="none"/>
<rect x="0" y="10.2" width="2" height="7.6" fill="#fff"/>
<rect x="21" y="8.2" width="17" height="12.4" fill="#fff"/>
<path d="M5.8 9.6 H20.6 L25.6 14.3 L20.6 19 H5.8Z" fill="#7db7ea" stroke="#1a73c7" stroke-width="1.4" stroke-linejoin="round"/>
<path d="M17.6 9.6 V19" stroke="#1a73c7" stroke-width="1.2"/>
<path d="M23.6 7.8 L37.2 21.4 M37.2 7.8 L23.6 21.4" stroke="#e8403a" stroke-width="1.4" stroke-linecap="round"/>
</svg>
<span class="t" style="left:1329.08px;top:151.82px;font-size:14.6px;line-height:19px;color:#2e2e2e;transform:scaleX(1.0484);">Delete</span>
<svg class="b" style="left:1346.06px;top:176.83px;" width="7.88" height="4.94" viewBox="0 0 7.88 4.94"><path d="M1 1 L3.94 3.94 L6.88 1" fill="none" stroke="#333" stroke-width="1.358" stroke-linecap="round" stroke-linejoin="round"/></svg>
<svg class="b" style="left:1386.7px;top:105.9px;" width="38" height="36" viewBox="0 0 38 36"><g transform="translate(0,5.7)"><rect x="1" y="1" width="34.8" height="26.8" fill="#fafafa" stroke="#5a5a5a" stroke-width="1.2"/><path d="M10.3 1 V27.8 M26.7 1 V27.8 M1 9.9 H35.8 M1 18.9 H35.8 " stroke="#6a6a6a" stroke-width="1" fill="none"/>
<rect x="10.3" y="9.8" width="16.4" height="9.1" fill="#7db7ea" stroke="#1a73c7" stroke-width="1.4"/>
</g>
<path d="M8.8 2.2 H28 M8.8 .4 V4 M28 .4 V4" stroke="#1e8ad6" stroke-width="1.2"/>
</svg>
<span class="t" style="left:1381.91px;top:149.72px;font-size:14.6px;line-height:19px;color:#2e2e2e;transform:scaleX(1.0207);">Format</span>
<svg class="b" style="left:1400.06px;top:175.13px;" width="7.88" height="4.94" viewBox="0 0 7.88 4.94"><path d="M1 1 L3.94 3.94 L6.88 1" fill="none" stroke="#333" stroke-width="1.358" stroke-linecap="round" stroke-linejoin="round"/></svg>
<svg class="b" style="left:1457.5px;top:107.3px;" width="19" height="20" viewBox="0 0 19 20"><path d="M16.6 4.4 V1.6 H2 L9.6 9.8 L2 18 H16.6 V15.2" fill="none" stroke="#4a4a4a" stroke-width="1.3" stroke-linejoin="round" stroke-linecap="round"/></svg>
<span class="t" style="left:1482.00px;top:108.52px;font-size:14.6px;line-height:19px;color:#2e2e2e;transform:scaleX(1.0147);">AutoSum</span>
<svg class="b" style="left:1564.86px;top:115.03px;" width="7.88" height="4.94" viewBox="0 0 7.88 4.94"><path d="M1 1 L3.94 3.94 L6.88 1" fill="none" stroke="#424242" stroke-width="1.261" stroke-linecap="round" stroke-linejoin="round"/></svg>
<svg class="b" style="left:1455.7px;top:139px;" width="22" height="20" viewBox="0 0 22 20">
<rect x="1.4" y="1.6" width="19.2" height="16.6" fill="#fafafa" stroke="#4a4a4a" stroke-width="1.3"/>
<path d="M1.4 4.1 H20.6" stroke="#4a4a4a" stroke-width="1.1"/>
<path d="M11 6.4 V14.2 M7.8 11.2 L11 14.4 L14.2 11.2" fill="none" stroke="#1e8ad6" stroke-width="1.3" stroke-linecap="round" stroke-linejoin="round"/>
</svg>
<span class="t" style="left:1480.70px;top:140.02px;font-size:14.6px;line-height:19px;color:#2e2e2e;transform:scaleX(1.1092);">Fill</span>
<svg class="b" style="left:1505.23px;top:147.014px;" width="7.544" height="4.772" viewBox="0 0 7.544 4.772"><path d="M1 1 L3.772 3.772 L6.544 1" fill="none" stroke="#333" stroke-width="1.261" stroke-linecap="round" stroke-linejoin="round"/></svg>
<svg class="b" style="left:1456px;top:170.3px;" width="21" height="21" viewBox="0 0 21 21">
<path d="M1.6 11.6 L11.6 1.6 L19.4 9.4 L9.4 19.4Z" fill="#fafafa" stroke="#9a35a8" stroke-width="1.4" stroke-linejoin="round"/>
<path d="M1.6 11.6 L5.8 7.4 L13.6 15.2 L9.4 19.4Z" fill="#d9a6e0" stroke="#9a35a8" stroke-width="1.4" stroke-linejoin="round"/>
</svg>
<span class="t" style="left:1481.29px;top:172.72px;font-size:14.6px;line-height:19px;color:#2e2e2e;transform:scaleX(0.9722);">Clear</span>
<svg class="b" style="left:1520.23px;top:179.214px;" width="7.544" height="4.772" viewBox="0 0 7.544 4.772"><path d="M1 1 L3.772 3.772 L6.544 1" fill="none" stroke="#333" stroke-width="1.261" stroke-linecap="round" stroke-linejoin="round"/></svg>
<span class="t" style="left:1595.90px;top:105.80px;font-size:18.6px;line-height:24px;color:#1e8ad6;transform:scaleX(0.9621);">A</span>
<span class="t" style="left:1595.38px;top:122.74px;font-size:19.6px;line-height:25px;color:#3d3d3d;transform:scaleX(1.0575);">Z</span>
<svg class="b" style="left:1609px;top:116px;" width="24" height="22" viewBox="0 0 24 22"><path d="M1.6 1.6 H21.4 V4 L13.8 11.8 V20.2 H9.2 V11.8 L1.6 4Z" fill="#fafafa" stroke="#4a4a4a" stroke-width="1.3" stroke-linejoin="round"/></svg>
<span class="t" style="left:1591.59px;top:150.02px;font-size:14.6px;line-height:19px;color:#2e2e2e;transform:scaleX(1.0752);">Sort &amp;</span>
<span class="t" style="left:1589.40px;top:169.82px;font-size:14.6px;line-height:19px;color:#2e2e2e;transform:scaleX(1.0290);">Filter</span>
<svg class="b" style="left:1627.83px;top:175.214px;" width="7.544" height="4.772" viewBox="0 0 7.544 4.772"><path d="M1 1 L3.772 3.772 L6.544 1" fill="none" stroke="#333" stroke-width="1.261" stroke-linecap="round" stroke-linejoin="round"/></svg>
<svg class="b" style="left:1652px;top:107px;" width="39" height="39" viewBox="0 0 39 39">
<circle cx="24" cy="15" r="13" fill="#fafafa" stroke="#4a4a4a" stroke-width="1.3"/>
<path d="M14.6 24.4 L2 37" stroke="#4a4a4a" stroke-width="1.4" stroke-linecap="round"/>
</svg>
<span class="t" style="left:1649.27px;top:150.02px;font-size:14.6px;line-height:19px;color:#2e2e2e;transform:scaleX(1.0568);">Find &amp;</span>
<span class="t" style="left:1644.84px;top:169.82px;font-size:14.6px;line-height:19px;color:#2e2e2e;transform:scaleX(0.9979);">Select</span>
<svg class="b" style="left:1689.53px;top:175.214px;" width="7.544" height="4.772" viewBox="0 0 7.544 4.772"><path d="M1 1 L3.772 3.772 L6.544 1" fill="none" stroke="#333" stroke-width="1.261" stroke-linecap="round" stroke-linejoin="round"/></svg>
<svg class="b" style="left:1732.3px;top:107.3px;" width="38" height="37" viewBox="0 0 38 37">
<rect x="1.8" y="1.8" width="33.6" height="33.4" fill="#fdf1ec" stroke="#df5a2e" stroke-width="1.6"/>
<rect x="5.4" y="5.4" width="11.6" height="11.4" fill="#fff" stroke="#df5a2e" stroke-width="1.4"/>
<rect x="20.2" y="5.4" width="11.6" height="11.4" fill="#fff" stroke="#df5a2e" stroke-width="1.4"/>
<rect x="5.4" y="20.2" width="11.6" height="11.4" fill="#fff" stroke="#df5a2e" stroke-width="1.4"/>
<rect x="20.2" y="20.2" width="11.6" height="11.4" fill="#fff" stroke="#df5a2e" stroke-width="1.4"/>
</svg>
<span class="t" style="left:1725.40px;top:150.02px;font-size:14.6px;line-height:19px;color:#2e2e2e;transform:scaleX(1.0493);">Add-ins</span>
<svg class="b" style="left:1818.5px;top:110px;" width="34" height="37" viewBox="0 0 34 37">
<path d="M14 28.6 H4.2 a2.4 2.4 0 0 1 -2.4 -2.4 V4 a2.4 2.4 0 0 1 2.4 -2.4 H17.2 L24 8.4 V15" fill="none" stroke="#3b78e7" stroke-width="1.3" stroke-linejoin="round"/>
<path d="M17.2 1.6 V6.4 a2 2 0 0 0 2 2 H24" fill="none" stroke="#3b78e7" stroke-width="1.2"/>
<path d="M6.4 20 C9.8 17.4 12.2 12.6 12 9.4 C11.9 8.2 10.6 8.2 10.7 9.6 C11 13 13.8 16.4 17 17.4 C18.6 17.8 18.2 16.2 16.8 16.2 C13.4 16.2 9 17.8 6.4 20Z" fill="none" stroke="#3b78e7" stroke-width=".9" stroke-linejoin="round"/>
<path d="M23.4 24.6 L26.8 21.2 a3.2 3.2 0 0 1 4.6 4.6 L29.4 27.8 M24.4 29.4 L21 32.8 a3.2 3.2 0 0 1 -4.6 -4.6 L18.4 26.2" fill="none" stroke="#3b78e7" stroke-width="1.5" stroke-linecap="round"/>
<path d="M21.4 29.6 L26.6 24.4" stroke="#3b78e7" stroke-width="1.5" stroke-linecap="round"/>
</svg>
<span class="t" style="left:1808.27px;top:150.02px;font-size:14.6px;line-height:19px;color:#2e2e2e;transform:scaleX(0.9980);">Create</span>
<span class="t" style="left:1811.45px;top:169.82px;font-size:14.6px;line-height:19px;color:#2e2e2e;transform:scaleX(0.9348);">a PDF</span>
<!-- s_grid -->
<div class="b" style="left:9.8px;top:232px;width:127.4px;height:29.8px;background:#fff;border:1px solid #eceef2;border-radius:5px;"></div>
<span class="t" style="left:17.50px;top:236.94px;font-size:15.8px;line-height:21px;color:#242424;transform:scaleX(0.9426);">A1</span>
<svg class="b" style="left:117.372px;top:243.786px;" width="13.256" height="7.628" viewBox="0 0 13.256 7.628"><path d="M1 1 L6.628 6.628 L12.256 1" fill="none" stroke="#2b2b2b" stroke-width="1.5035" stroke-linecap="round" stroke-linejoin="round"/></svg>
<div class="b" style="left:147.8px;top:241.2px;width:3.2px;height:3.2px;background:#3a3a3a;"></div>
<div class="b" style="left:147.8px;top:246.2px;width:3.2px;height:3.2px;background:#3a3a3a;"></div>
<div class="b" style="left:147.8px;top:251.2px;width:3.2px;height:3.2px;background:#3a3a3a;"></div>
<div class="b" style="left:162px;top:232px;width:92px;height:29.8px;background:#fff;border:1px solid #eceef2;border-radius:5px;"></div>
<svg class="b" style="left:169px;top:239px;" width="18" height="18" viewBox="0 0 18 18"><path d="M2 2 L15.5 15.5 M15.5 2 L2 15.5" stroke="#b5b5b5" stroke-width="1.2" stroke-linecap="round"/></svg>
<svg class="b" style="left:196px;top:239px;" width="22" height="18" viewBox="0 0 22 18"><path d="M2 9.5 L7.5 15 L20 2.5" fill="none" stroke="#b5b5b5" stroke-width="1.2" stroke-linecap="round" stroke-linejoin="round"/></svg>
<span class="t" style="left:229.37px;top:232.24px;font-size:21.5px;line-height:28px;color:#2b2b2b;font-family:'Liberation Serif',serif;-webkit-text-stroke:0.43px #2b2b2b;font-style:italic;transform:scaleX(1.0631);">f</span>
<span class="t" style="left:238.50px;top:238.80px;font-size:16.5px;line-height:21px;color:#2b2b2b;font-family:'Liberation Serif',serif;-webkit-text-stroke:0.33px #2b2b2b;font-style:italic;transform:scaleX(1.1988);">x</span>
<div class="b" style="left:258.8px;top:232px;width:1651px;height:29.8px;background:#fff;border:1px solid #eceef2;border-radius:5px;"></div>
<span class="t" style="left:272.30px;top:236.94px;font-size:15.8px;line-height:21px;color:#242424;transform:scaleX(0.9854);">QR Id</span>
<svg class="b" style="left:1891.77px;top:242.386px;" width="13.256" height="7.628" viewBox="0 0 13.256 7.628"><path d="M1 1 L6.628 6.628 L12.256 1" fill="none" stroke="#2b2b2b" stroke-width="1.455" stroke-linecap="round" stroke-linejoin="round"/></svg>
<div class="b" style="left:0px;top:270px;width:1894.5px;height:683px;background:#fff;"></div>
<div class="b" style="left:0px;top:270px;width:1894.5px;height:23px;background:#efefef;"></div>
<div class="b" style="left:0px;top:270px;width:33px;height:683px;background:#efefef;"></div>
<svg class="b" style="left:13px;top:274px;" width="18" height="17" viewBox="0 0 18 17"><path d="M16.5 1 V15.5 H2Z" fill="#d9d9d9"/></svg>
<div class="b" style="left:34px;top:270px;width:266px;height:22px;background:#e0e0e0;"></div>
<div class="b" style="left:0px;top:294px;width:32px;height:23px;background:#e0e0e0;"></div>
<div class="b" style="left:33px;top:317px;width:1861.5px;height:1px;background:#e1e1e1;"></div>
<div class="b" style="left:0px;top:317px;width:33px;height:1px;background:linear-gradient(90deg,#efefef 0%,#dedede 45%,#c6c6c6 100%);"></div>
<div class="b" style="left:33px;top:341px;width:1861.5px;height:1px;background:#e1e1e1;"></div>
<div class="b" style="left:0px;top:341px;width:33px;height:1px;background:linear-gradient(90deg,#efefef 0%,#dedede 45%,#c6c6c6 100%);"></div>
<div class="b" style="left:33px;top:365px;width:1861.5px;height:1px;background:#e1e1e1;"></div>
<div class="b" style="left:0px;top:365px;width:33px;height:1px;background:linear-gradient(90deg,#efefef 0%,#dedede 45%,#c6c6c6 100%);"></div>
<div class="b" style="left:33px;top:389px;width:1861.5px;height:1px;background:#e1e1e1;"></div>
<div class="b" style="left:0px;top:389px;width:33px;height:1px;background:linear-gradient(90deg,#efefef 0%,#dedede 45%,#c6c6c6 100%);"></div>
<div class="b" style="left:33px;top:413px;width:1861.5px;height:1px;background:#e1e1e1;"></div>
<div class="b" style="left:0px;top:413px;width:33px;height:1px;background:linear-gradient(90deg,#efefef 0%,#dedede 45%,#c6c6c6 100%);"></div>
<div class="b" style="left:33px;top:437px;width:1861.5px;height:1px;background:#e1e1e1;"></div>
<div class="b" style="left:0px;top:437px;width:33px;height:1px;background:linear-gradient(90deg,#efefef 0%,#dedede 45%,#c6c6c6 100%);"></div>
<div class="b" style="left:33px;top:461px;width:1861.5px;height:1px;background:#e1e1e1;"></div>
<div class="b" style="left:0px;top:461px;width:33px;height:1px;background:linear-gradient(90deg,#efefef 0%,#dedede 45%,#c6c6c6 100%);"></div>
<div class="b" style="left:33px;top:485px;width:1861.5px;height:1px;background:#e1e1e1;"></div>
<div class="b" style="left:0px;top:485px;width:33px;height:1px;background:linear-gradient(90deg,#efefef 0%,#dedede 45%,#c6c6c6 100%);"></div>
<div class="b" style="left:33px;top:509px;width:1861.5px;height:1px;background:#e1e1e1;"></div>
<div class="b" style="left:0px;top:509px;width:33px;height:1px;background:linear-gradient(90deg,#efefef 0%,#dedede 45%,#c6c6c6 100%);"></div>
<div class="b" style="left:33px;top:533px;width:1861.5px;height:1px;background:#e1e1e1;"></div>
<div class="b" style="left:0px;top:533px;width:33px;height:1px;background:linear-gradient(90deg,#efefef 0%,#dedede 45%,#c6c6c6 100%);"></div>
<div class="b" style="left:33px;top:557px;width:1861.5px;height:1px;background:#e1e1e1;"></div>
<div class="b" style="left:0px;top:557px;width:33px;height:1px;background:linear-gradient(90deg,#efefef 0%,#dedede 45%,#c6c6c6 100%);"></div>
<div class="b" style="left:33px;top:581px;width:1861.5px;height:1px;background:#e1e1e1;"></div>
<div class="b" style="left:0px;top:581px;width:33px;height:1px;background:linear-gradient(90deg,#efefef 0%,#dedede 45%,#c6c6c6 100%);"></div>
<div class="b" style="left:33px;top:605px;width:1861.5px;height:1px;background:#e1e1e1;"></div>
<div class="b" style="left:0px;top:605px;width:33px;height:1px;background:linear-gradient(90deg,#efefef 0%,#dedede 45%,#c6c6c6 100%);"></div>
<div class="b" style="left:33px;top:629px;width:1861.5px;height:1px;background:#e1e1e1;"></div>
<div class="b" style="left:0px;top:629px;width:33px;height:1px;background:linear-gradient(90deg,#efefef 0%,#dedede 45%,#c6c6c6 100%);"></div>
<div class="b" style="left:33px;top:653px;width:1861.5px;height:1px;background:#e1e1e1;"></div>
<div class="b" style="left:0px;top:653px;width:33px;height:1px;background:linear-gradient(90deg,#efefef 0%,#dedede 45%,#c6c6c6 100%);"></div>
<div class="b" style="left:33px;top:677px;width:1861.5px;height:1px;background:#e1e1e1;"></div>
<div class="b" style="left:0px;top:677px;width:33px;height:1px;background:linear-gradient(90deg,#efefef 0%,#dedede 45%,#c6c6c6 100%);"></div>
<div class="b" style="left:33px;top:701px;width:1861.5px;height:1px;background:#e1e1e1;"></div>
<div class="b" style="left:0px;top:701px;width:33px;height:1px;background:linear-gradient(90deg,#efefef 0%,#dedede 45%,#c6c6c6 100%);"></div>
<div class="b" style="left:33px;top:725px;width:1861.5px;height:1px;background:#e1e1e1;"></div>
<div class="b" style="left:0px;top:725px;width:33px;height:1px;background:linear-gradient(90deg,#efefef 0%,#dedede 45%,#c6c6c6 100%);"></div>
<div class="b" style="left:33px;top:749px;width:1861.5px;height:1px;background:#e1e1e1;"></div>
<div class="b" style="left:0px;top:749px;width:33px;height:1px;background:linear-gradient(90deg,#efefef 0%,#dedede 45%,#c6c6c6 100%);"></div>
<div class="b" style="left:33px;top:773px;width:1861.5px;height:1px;background:#e1e1e1;"></div>
<div class="b" style="left:0px;top:773px;width:33px;height:1px;background:linear-gradient(90deg,#efefef 0%,#dedede 45%,#c6c6c6 100%);"></div>
<div class="b" style="left:33px;top:797px;width:1861.5px;height:1px;background:#e1e1e1;"></div>
<div class="b" style="left:0px;top:797px;width:33px;height:1px;background:linear-gradient(90deg,#efefef 0%,#dedede 45%,#c6c6c6 100%);"></div>
<div class="b" style="left:33px;top:821px;width:1861.5px;height:1px;background:#e1e1e1;"></div>
<div class="b" style="left:0px;top:821px;width:33px;height:1px;background:linear-gradient(90deg,#efefef 0%,#dedede 45%,#c6c6c6 100%);"></div>
<div class="b" style="left:33px;top:845px;width:1861.5px;height:1px;background:#e1e1e1;"></div>
<div class="b" style="left:0px;top:845px;width:33px;height:1px;background:linear-gradient(90deg,#efefef 0%,#dedede 45%,#c6c6c6 100%);"></div>
<div class="b" style="left:33px;top:869px;width:1861.5px;height:1px;background:#e1e1e1;"></div>
<div class="b" style="left:0px;top:869px;width:33px;height:1px;background:linear-gradient(90deg,#efefef 0%,#dedede 45%,#c6c6c6 100%);"></div>
<div class="b" style="left:33px;top:893px;width:1861.5px;height:1px;background:#e1e1e1;"></div>
<div class="b" style="left:0px;top:893px;width:33px;height:1px;background:linear-gradient(90deg,#efefef 0%,#dedede 45%,#c6c6c6 100%);"></div>
<div class="b" style="left:33px;top:917px;width:1861.5px;height:1px;background:#e1e1e1;"></div>
<div class="b" style="left:0px;top:917px;width:33px;height:1px;background:linear-gradient(90deg,#efefef 0%,#dedede 45%,#c6c6c6 100%);"></div>
<div class="b" style="left:33px;top:941px;width:1861.5px;height:1px;background:#e1e1e1;"></div>
<div class="b" style="left:0px;top:941px;width:33px;height:1px;background:linear-gradient(90deg,#efefef 0%,#dedede 45%,#c6c6c6 100%);"></div>
<div class="b" style="left:33px;top:294px;width:1px;height:659px;background:#a8a8a8;"></div>
<div class="b" style="left:300px;top:293px;width:1px;height:660px;background:#e1e1e1;"></div>
<div class="b" style="left:300px;top:271px;width:1px;height:22px;background:#b4b4b4;"></div>
<div class="b" style="left:532px;top:293px;width:1px;height:660px;background:#e1e1e1;"></div>
<div class="b" style="left:532px;top:271px;width:1px;height:22px;background:#dadada;"></div>
<div class="b" style="left:621px;top:293px;width:1px;height:660px;background:#e1e1e1;"></div>
<div class="b" style="left:621px;top:271px;width:1px;height:22px;background:#dadada;"></div>
<div class="b" style="left:710px;top:293px;width:1px;height:660px;background:#e1e1e1;"></div>
<div class="b" style="left:710px;top:271px;width:1px;height:22px;background:#dadada;"></div>
<div class="b" style="left:888px;top:293px;width:1px;height:660px;background:#e1e1e1;"></div>
<div class="b" style="left:888px;top:271px;width:1px;height:22px;background:#dadada;"></div>
<div class="b" style="left:977px;top:293px;width:1px;height:660px;background:#e1e1e1;"></div>
<div class="b" style="left:977px;top:271px;width:1px;height:22px;background:#dadada;"></div>
<div class="b" style="left:1066px;top:293px;width:1px;height:660px;background:#e1e1e1;"></div>
<div class="b" style="left:1066px;top:271px;width:1px;height:22px;background:#dadada;"></div>
<div class="b" style="left:1155px;top:293px;width:1px;height:660px;background:#e1e1e1;"></div>
<div class="b" style="left:1155px;top:271px;width:1px;height:22px;background:#dadada;"></div>
<div class="b" style="left:1244px;top:293px;width:1px;height:660px;background:#e1e1e1;"></div>
<div class="b" style="left:1244px;top:271px;width:1px;height:22px;background:#dadada;"></div>
<div class="b" style="left:1342px;top:293px;width:1px;height:660px;background:#e1e1e1;"></div>
<div class="b" style="left:1342px;top:271px;width:1px;height:22px;background:#dadada;"></div>
<div class="b" style="left:1431px;top:293px;width:1px;height:660px;background:#e1e1e1;"></div>
<div class="b" style="left:1431px;top:271px;width:1px;height:22px;background:#dadada;"></div>
<div class="b" style="left:1520px;top:293px;width:1px;height:660px;background:#e1e1e1;"></div>
<div class="b" style="left:1520px;top:271px;width:1px;height:22px;background:#dadada;"></div>
<div class="b" style="left:1609px;top:293px;width:1px;height:660px;background:#e1e1e1;"></div>
<div class="b" style="left:1609px;top:271px;width:1px;height:22px;background:#dadada;"></div>
<div class="b" style="left:1698px;top:293px;width:1px;height:660px;background:#e1e1e1;"></div>
<div class="b" style="left:1698px;top:271px;width:1px;height:22px;background:#dadada;"></div>
<div class="b" style="left:1787px;top:293px;width:1px;height:660px;background:#e1e1e1;"></div>
<div class="b" style="left:1787px;top:271px;width:1px;height:22px;background:#dadada;"></div>
<div class="b" style="left:1894px;top:293px;width:1px;height:660px;background:#e1e1e1;"></div>
<div class="b" style="left:1894px;top:271px;width:1px;height:22px;background:#dadada;"></div>
<div class="b" style="left:33px;top:270px;width:1px;height:24px;background:#b8b8b8;"></div>
<div class="b" style="left:33px;top:293px;width:1861.5px;height:1px;background:#ababab;"></div>
<span class="t" style="left:161.81px;top:272.08px;font-size:17.1px;line-height:22px;color:#1e7145;transform:scaleX(1.0000);">A</span>
<span class="t" style="left:411.06px;top:272.08px;font-size:17.1px;line-height:22px;color:#444;transform:scaleX(1.0000);">B</span>
<span class="t" style="left:571.22px;top:272.08px;font-size:17.1px;line-height:22px;color:#444;transform:scaleX(1.0000);">C</span>
<span class="t" style="left:660.04px;top:272.08px;font-size:17.1px;line-height:22px;color:#444;transform:scaleX(1.0000);">D</span>
<span class="t" style="left:793.97px;top:272.08px;font-size:17.1px;line-height:22px;color:#444;transform:scaleX(1.0000);">E</span>
<span class="t" style="left:927.94px;top:272.08px;font-size:17.1px;line-height:22px;color:#444;transform:scaleX(1.0000);">F</span>
<span class="t" style="left:1016.04px;top:272.08px;font-size:17.1px;line-height:22px;color:#444;transform:scaleX(1.0000);">G</span>
<span class="t" style="left:1105.34px;top:272.08px;font-size:17.1px;line-height:22px;color:#444;transform:scaleX(1.0000);">H</span>
<span class="t" style="left:1198.15px;top:272.08px;font-size:17.1px;line-height:22px;color:#444;transform:scaleX(1.0000);">I</span>
<span class="t" style="left:1290.24px;top:272.08px;font-size:17.1px;line-height:22px;color:#444;transform:scaleX(1.0000);">J</span>
<span class="t" style="left:1381.22px;top:272.08px;font-size:17.1px;line-height:22px;color:#444;transform:scaleX(1.0000);">K</span>
<span class="t" style="left:1471.33px;top:272.08px;font-size:17.1px;line-height:22px;color:#444;transform:scaleX(1.0000);">L</span>
<span class="t" style="left:1558.40px;top:272.08px;font-size:17.1px;line-height:22px;color:#444;transform:scaleX(1.0000);">M</span>
<span class="t" style="left:1648.34px;top:272.08px;font-size:17.1px;line-height:22px;color:#444;transform:scaleX(1.0000);">N</span>
<span class="t" style="left:1736.87px;top:272.08px;font-size:17.1px;line-height:22px;color:#444;transform:scaleX(1.0000);">O</span>
<span class="t" style="left:1835.56px;top:272.08px;font-size:17.1px;line-height:22px;color:#444;transform:scaleX(1.0000);">P</span>
<div class="b" style="left:0;top:270px;width:40px;height:683px;overflow:hidden;"><div class="b" style="left:0;top:-270px;">
<span class="t" style="left:12.11px;top:295.09px;font-size:17.4px;line-height:23px;color:#1e7145;transform:scaleX(1.0000);">1</span>
<span class="t" style="left:12.37px;top:319.09px;font-size:17.4px;line-height:23px;color:#444;transform:scaleX(1.0000);">2</span>
<span class="t" style="left:12.42px;top:343.09px;font-size:17.4px;line-height:23px;color:#444;transform:scaleX(1.0000);">3</span>
<span class="t" style="left:12.41px;top:367.09px;font-size:17.4px;line-height:23px;color:#444;transform:scaleX(1.0000);">4</span>
<span class="t" style="left:12.37px;top:391.09px;font-size:17.4px;line-height:23px;color:#444;transform:scaleX(1.0000);">5</span>
<span class="t" style="left:12.28px;top:415.09px;font-size:17.4px;line-height:23px;color:#444;transform:scaleX(1.0000);">6</span>
<span class="t" style="left:12.37px;top:439.09px;font-size:17.4px;line-height:23px;color:#444;transform:scaleX(1.0000);">7</span>
<span class="t" style="left:12.37px;top:463.09px;font-size:17.4px;line-height:23px;color:#444;transform:scaleX(1.0000);">8</span>
<span class="t" style="left:12.37px;top:487.09px;font-size:17.4px;line-height:23px;color:#444;transform:scaleX(1.0000);">9</span>
<span class="t" style="left:7.20px;top:511.09px;font-size:17.4px;line-height:23px;color:#444;transform:scaleX(1.0000);">10</span>
<span class="t" style="left:7.93px;top:535.09px;font-size:17.4px;line-height:23px;color:#444;transform:scaleX(1.0000);">11</span>
<span class="t" style="left:7.33px;top:559.09px;font-size:17.4px;line-height:23px;color:#444;transform:scaleX(1.0000);">12</span>
<span class="t" style="left:7.24px;top:583.09px;font-size:17.4px;line-height:23px;color:#444;transform:scaleX(1.0000);">13</span>
<span class="t" style="left:7.11px;top:607.09px;font-size:17.4px;line-height:23px;color:#444;transform:scaleX(1.0000);">14</span>
<span class="t" style="left:7.24px;top:631.09px;font-size:17.4px;line-height:23px;color:#444;transform:scaleX(1.0000);">15</span>
<span class="t" style="left:7.24px;top:655.09px;font-size:17.4px;line-height:23px;color:#444;transform:scaleX(1.0000);">16</span>
<span class="t" style="left:7.33px;top:679.09px;font-size:17.4px;line-height:23px;color:#444;transform:scaleX(1.0000);">17</span>
<span class="t" style="left:7.24px;top:703.09px;font-size:17.4px;line-height:23px;color:#444;transform:scaleX(1.0000);">18</span>
<span class="t" style="left:7.28px;top:727.09px;font-size:17.4px;line-height:23px;color:#444;transform:scaleX(1.0000);">19</span>
<span class="t" style="left:7.41px;top:751.09px;font-size:17.4px;line-height:23px;color:#444;transform:scaleX(1.0000);">20</span>
<span class="t" style="left:7.50px;top:775.09px;font-size:17.4px;line-height:23px;color:#444;transform:scaleX(1.0000);">21</span>
<span class="t" style="left:7.54px;top:799.09px;font-size:17.4px;line-height:23px;color:#444;transform:scaleX(1.0000);">22</span>
<span class="t" style="left:7.46px;top:823.09px;font-size:17.4px;line-height:23px;color:#444;transform:scaleX(1.0000);">23</span>
<span class="t" style="left:7.33px;top:847.09px;font-size:17.4px;line-height:23px;color:#444;transform:scaleX(1.0000);">24</span>
<span class="t" style="left:7.46px;top:871.09px;font-size:17.4px;line-height:23px;color:#444;transform:scaleX(1.0000);">25</span>
<span class="t" style="left:7.46px;top:895.09px;font-size:17.4px;line-height:23px;color:#444;transform:scaleX(1.0000);">26</span>
<span class="t" style="left:7.54px;top:919.09px;font-size:17.4px;line-height:23px;color:#444;transform:scaleX(1.0000);">27</span>
<span class="t" style="left:7.46px;top:943.09px;font-size:17.4px;line-height:23px;color:#444;transform:scaleX(1.0000);">28</span>
</div></div>
<div class="b" style="left:34px;top:294px;width:1860px;height:24px;background:#ffff00;border-bottom:1.3px solid #000;"></div>
<div class="b" style="left:34px;top:293px;width:1860px;height:1px;background:#9c9c7a;"></div>
<div class="b" style="left:300px;top:293px;width:1px;height:25px;background:#000;"></div>
<div class="b" style="left:532px;top:293px;width:1px;height:25px;background:#000;"></div>
<div class="b" style="left:621px;top:293px;width:1px;height:25px;background:#000;"></div>
<div class="b" style="left:710px;top:293px;width:1px;height:25px;background:#000;"></div>
<div class="b" style="left:888px;top:293px;width:1px;height:25px;background:#000;"></div>
<div class="b" style="left:977px;top:293px;width:1px;height:25px;background:#000;"></div>
<div class="b" style="left:1066px;top:293px;width:1px;height:25px;background:#000;"></div>
<div class="b" style="left:1155px;top:293px;width:1px;height:25px;background:#000;"></div>
<div class="b" style="left:1244px;top:293px;width:1px;height:25px;background:#000;"></div>
<div class="b" style="left:1342px;top:293px;width:1px;height:25px;background:#000;"></div>
<div class="b" style="left:1431px;top:293px;width:1px;height:25px;background:#000;"></div>
<div class="b" style="left:1520px;top:293px;width:1px;height:25px;background:#000;"></div>
<div class="b" style="left:1609px;top:293px;width:1px;height:25px;background:#000;"></div>
<div class="b" style="left:1698px;top:293px;width:1px;height:25px;background:#000;"></div>
<div class="b" style="left:1787px;top:293px;width:1px;height:25px;background:#000;"></div>
<span class="t" style="left:36.80px;top:295.80px;font-size:16px;line-height:21px;color:#000;transform:scaleX(0.9780);">QR Id</span>
<span class="t" style="left:303.80px;top:295.80px;font-size:16px;line-height:21px;color:#000;transform:scaleX(0.9776);">QR Name</span>
<span class="t" style="left:536.10px;top:295.80px;font-size:16px;line-height:21px;color:#000;transform:scaleX(0.9668);">QR Type</span>
<span class="t" style="left:624.78px;top:295.80px;font-size:16px;line-height:21px;color:#000;transform:scaleX(1.0130);">User Id</span>
<span class="t" style="left:713.80px;top:295.80px;font-size:16px;line-height:21px;color:#000;transform:scaleX(0.9750);">Scanned On</span>
<span class="t" style="left:891.72px;top:295.80px;font-size:16px;line-height:21px;color:#000;transform:scaleX(1.0009);">Device</span>
<span class="t" style="left:980.86px;top:295.80px;font-size:16px;line-height:21px;color:#000;transform:scaleX(0.8856);">OS</span>
<span class="t" style="left:1069.66px;top:295.80px;font-size:16px;line-height:21px;color:#000;transform:scaleX(1.0490);">Browser</span>
<span class="t" style="left:1159.17px;top:295.80px;font-size:16px;line-height:21px;color:#000;transform:scaleX(1.0326);">Country</span>
<span class="t" style="left:1248.28px;top:295.80px;font-size:16px;line-height:21px;color:#000;transform:scaleX(1.0000);">State</span>
<span class="t" style="left:1346.20px;top:295.80px;font-size:16px;line-height:21px;color:#000;transform:scaleX(0.9955);">City</span>
<span class="t" style="left:1435.30px;top:295.80px;font-size:16px;line-height:21px;color:#000;transform:scaleX(0.9674);">Suburb</span>
<span class="t" style="left:1523.68px;top:295.80px;font-size:16px;line-height:21px;color:#000;transform:scaleX(1.0293);">Postcode</span>
<span class="t" style="left:1612.65px;top:295.80px;font-size:16px;line-height:21px;color:#000;transform:scaleX(1.0538);">Latitude</span>
<span class="t" style="left:1701.18px;top:295.80px;font-size:16px;line-height:21px;color:#000;transform:scaleX(1.0319);">Longitude</span>
<span class="t" style="left:1789.84px;top:295.80px;font-size:16px;line-height:21px;color:#000;transform:scaleX(1.1525);">Ip</span>
<span class="t" style="left:36.85px;top:319.80px;font-size:16px;line-height:21px;color:#000;transform:scaleX(1.0207);">eNyg</span>
<span class="t" style="left:303.93px;top:319.80px;font-size:16px;line-height:21px;color:#000;transform:scaleX(0.9891);">Digital Business Card Demo</span>
<span class="t" style="left:536.43px;top:319.80px;font-size:16px;line-height:21px;color:#000;transform:scaleX(0.9040);">VCARD</span>
<span class="t" style="left:624.94px;top:319.80px;font-size:16px;line-height:21px;color:#000;transform:scaleX(1.0166);">u94425768</span>
<span class="t" style="left:714.17px;top:319.80px;font-size:16px;line-height:21px;color:#000;transform:scaleX(1.0406);">4/7/2026, 2:23:14 PM</span>
<span class="t" style="left:892.50px;top:319.80px;font-size:16px;line-height:21px;color:#000;transform:scaleX(0.9965);">Apple</span>
<span class="t" style="left:980.56px;top:319.80px;font-size:16px;line-height:21px;color:#000;transform:scaleX(0.9043);">iOS</span>
<span class="t" style="left:1070.19px;top:319.80px;font-size:16px;line-height:21px;color:#000;transform:scaleX(1.0101);">Chrome</span>
<span class="t" style="left:1158.53px;top:319.80px;font-size:16px;line-height:21px;color:#000;transform:scaleX(1.0241);">India</span>
<span class="t" style="left:1247.66px;top:319.80px;font-size:16px;line-height:21px;color:#000;transform:scaleX(1.0434);">Maharashtra</span>
<span class="t" style="left:1345.77px;top:319.80px;font-size:16px;line-height:21px;color:#000;transform:scaleX(0.9594);">Pune</span>
<span class="t" style="left:1524.67px;top:319.80px;font-size:16px;line-height:21px;color:#000;transform:scaleX(1.0226);">411004</span>
<span class="t" style="left:1635.75px;top:319.80px;font-size:16px;line-height:21px;color:#000;transform:scaleX(1.0417);">18.5211</span>
<span class="t" style="left:1724.68px;top:319.80px;font-size:16px;line-height:21px;color:#000;transform:scaleX(1.0224);">73.8502</span>
<span class="t" style="left:1790.25px;top:319.80px;font-size:16px;line-height:21px;color:#000;transform:scaleX(1.0417);">103.97.242.0</span>
<span class="t" style="left:36.20px;top:367.80px;font-size:16px;line-height:21px;color:#000;transform:scaleX(1.0123);">Date : Apr 7, 2026, 4:55:36 PM</span>
<svg class="b" style="left:1521px;top:318px;" width="8" height="8" viewBox="0 0 8 8"><path d="M0 0 H7 L0 7Z" fill="#12801a"/></svg>
<div class="b" style="left:34px;top:294px;width:266px;height:23px;border:1.2px solid #fff;"></div>
<div class="b" style="left:32px;top:292px;width:270px;height:27px;border:2.2px solid #1e7145;"></div>
<div class="b" style="left:296.5px;top:314px;width:7px;height:7px;background:#1e7145;border:1px solid #fff;"></div>
<div class="b" style="left:34px;top:292px;width:266px;height:1.5px;background:#1e7145;"></div>
<div class="b" style="left:1897.2px;top:270.4px;width:21px;height:685.6px;background:#f5f5f5;border-radius:10.5px;"></div>
<svg class="b" style="left:1901px;top:275px;" width="13" height="10" viewBox="0 0 13 10"><path d="M6.5 1.2 L12 8.6 H1Z" fill="#6a6a6a" stroke="#6a6a6a" stroke-width="1" stroke-linejoin="round"/></svg>
<div class="b" style="left:1902px;top:291.3px;width:11px;height:619.5px;background:#6f6f6f;border-radius:5.5px;"></div>
<svg class="b" style="left:1901px;top:940px;" width="13" height="10" viewBox="0 0 13 10"><path d="M6.5 8.8 L12 1.4 H1Z" fill="#6a6a6a" stroke="#6a6a6a" stroke-width="1" stroke-linejoin="round"/></svg>
<!-- s_bottom -->
<div class="b" style="left:0px;top:953px;width:1918px;height:10px;background:#fff;"></div>
<div class="b" style="left:0px;top:953px;width:140.8px;height:40px;background:#e4e6ec;border-radius:0 6px 0 0;"></div>
<div class="b" style="left:239.8px;top:953px;width:1678.2px;height:40px;background:#e4e6ec;border-radius:6px 0 0 0;"></div>
<svg class="b" style="left:30px;top:964px;" width="12" height="16" viewBox="0 0 12 16"><path d="M9.5 2 L2.5 8 L9.5 14" fill="none" stroke="#9a9a9a" stroke-width="1.3" stroke-linecap="round" stroke-linejoin="round"/></svg>
<svg class="b" style="left:70px;top:964px;" width="12" height="16" viewBox="0 0 12 16"><path d="M2.5 2 L9.5 8 L2.5 14" fill="none" stroke="#9a9a9a" stroke-width="1.3" stroke-linecap="round" stroke-linejoin="round"/></svg>
<div class="b" style="left:140.8px;top:953px;width:99px;height:35.2px;background:#fff;border-radius:0 0 6px 6px;"></div>
<span class="t" style="left:150.74px;top:959.88px;font-size:16.5px;line-height:21px;color:#1a1a1a;-webkit-text-stroke:0.33px #1a1a1a;transform:scaleX(1.0260);">Scan Data</span>
<div class="b" style="left:151px;top:982.3px;width:78.5px;height:2px;background:#107c41;"></div>
<div class="b" style="left:245px;top:962px;width:1px;height:21px;background:#c4c6cc;"></div>
<svg class="b" style="left:296px;top:963px;" width="18" height="18" viewBox="0 0 18 18"><path d="M9 1.8 V16.2 M1.8 9 H16.2" stroke="#333" stroke-width="1.5" stroke-linecap="round"/></svg>
<div class="b" style="left:1154.6px;top:966.8px;width:3px;height:3px;background:#333;"></div>
<div class="b" style="left:1154.6px;top:971.8px;width:3px;height:3px;background:#333;"></div>
<div class="b" style="left:1154.6px;top:976.8px;width:3px;height:3px;background:#333;"></div>
<div class="b" style="left:1176px;top:961.5px;width:721px;height:21.5px;background:#f5f5f5;border-radius:10.75px;"></div>
<svg class="b" style="left:1181px;top:966px;" width="10" height="13" viewBox="0 0 10 13"><path d="M1.4 6.5 L8.6 1 V12Z" fill="#6a6a6a" stroke="#6a6a6a" stroke-width="1" stroke-linejoin="round"/></svg>
<div class="b" style="left:1197px;top:967px;width:636px;height:11px;background:#6f6f6f;border-radius:5.5px;"></div>
<svg class="b" style="left:1882px;top:966px;" width="10" height="13" viewBox="0 0 10 13"><path d="M8.6 6.5 L1.4 1 V12Z" fill="#6a6a6a" stroke="#6a6a6a" stroke-width="1" stroke-linejoin="round"/></svg>
<div class="b" style="left:0px;top:993px;width:1918px;height:27px;background:#f5f5f5;"></div>
<span class="t" style="left:13.39px;top:999.80px;font-size:12.5px;line-height:16px;color:#3b3b3b;transform:scaleX(1.0135);">Ready</span>
<svg class="b" style="left:75px;top:997px;" width="21" height="20" viewBox="0 0 21 20">
<circle cx="8.8" cy="4.6" r="2.2" fill="none" stroke="#3b3b3b" stroke-width="1.2"/>
<path d="M1.8 5.6 C1.2 7.4 4.4 9 8.6 9 C11.6 9 13.8 7.4 15.2 4.2 C15.8 2.8 17.6 3.4 17 5" fill="none" stroke="#3b3b3b" stroke-width="1.2" stroke-linecap="round"/>
<path d="M6.4 8.8 C6.8 11.4 5.2 12.6 4.6 14.4 C4 16.4 5.4 17.8 4.2 18.4 M11 8.8 C11.2 10.4 10.2 11.4 10.2 12.4" fill="none" stroke="#3b3b3b" stroke-width="1.2" stroke-linecap="round"/>
<path d="M9.6 14.4 L12.2 17.4 L18.4 11" fill="none" stroke="#3b3b3b" stroke-width="1.4" stroke-linecap="round" stroke-linejoin="round"/>
</svg>
<span class="t" style="left:98.50px;top:999.80px;font-size:12.5px;line-height:16px;color:#3b3b3b;transform:scaleX(1.0544);">Accessibility: Good to go</span>
<div class="b" style="left:1547px;top:994px;width:50px;height:26px;background:#e1e1e1;"></div>
<svg class="b" style="left:1562px;top:997.5px;" width="19" height="18" viewBox="0 0 19 18">
<rect x="1" y="1" width="16.5" height="15.5" fill="none" stroke="#444" stroke-width="1.2"/>
<path d="M6.5 1 V16.5 M12 1 V16.5 M1 6.2 H17.5 M1 11.4 H17.5" stroke="#444" stroke-width="1.1"/>
</svg>
<svg class="b" style="left:1612px;top:997.5px;" width="20" height="18" viewBox="0 0 20 18">
<rect x="1.5" y="1" width="16.5" height="15.5" fill="none" stroke="#444" stroke-width="1.2"/>
<rect x="5" y="4.6" width="9.5" height="8.5" fill="none" stroke="#444" stroke-width="1.1"/>
<path d="M7 7.5 H12.5 M7 10 H12.5" stroke="#444" stroke-width="1"/>
</svg>
<svg class="b" style="left:1662px;top:997.5px;" width="20" height="18" viewBox="0 0 20 18">
<rect x="1.5" y="1" width="16.5" height="15.5" fill="none" stroke="#444" stroke-width="1.2"/>
<path d="M7.5 1 V9 H1.5 M13 1 V9 H7.5" fill="none" stroke="#444" stroke-width="1.1"/>
</svg>
<div class="b" style="left:1704px;top:1006.5px;width:9px;height:1.2px;background:#444;"></div>
<div class="b" style="left:1720px;top:1006.6px;width:124px;height:1px;background:#6a6a6a;"></div>
<div class="b" style="left:1779px;top:999.5px;width:5.5px;height:14.5px;background:#555;"></div>
<svg class="b" style="left:1850px;top:1002px;" width="10" height="10" viewBox="0 0 10 10"><path d="M5 .5 V9.5 M.5 5 H9.5" stroke="#444" stroke-width="1.2"/></svg>
<span class="t" style="left:1876.44px;top:999.80px;font-size:12.5px;line-height:16px;color:#3b3b3b;transform:scaleX(1.0000);">99%</span>
<!-- s_taskbar -->
<div class="b" style="left:0px;top:1020px;width:1918px;height:58px;background:linear-gradient(90deg,#1b1c23 0%,#1b1d27 13%,#1a1f34 18%,#172047 26%,#16204c 36%,#172047 47%,#191f3a 57%,#1b1d28 65%,#1c1c22 72%,#1c1c20 100%);"></div>
<div class="b" style="left:0px;top:1020px;width:1918px;height:1px;background:#3b3c44;"></div>
<div class="b" style="left:27.5px;top:1036px;width:25px;height:25px;border-radius:50%;background:linear-gradient(140deg,#f5bd22 5%,#f59a18 45%,#ee6711 92%);"></div>
<div class="b" style="left:39.5px;top:1027.5px;width:19px;height:19px;border-radius:50%;background:#fc9aa9;"></div>
<span class="t" style="left:44.85px;top:1028.77px;font-size:13px;line-height:17px;color:#1c1c1c;transform:scaleX(1.1496);">2</span>
<span class="t" style="left:64.01px;top:1030.49px;font-size:14.5px;line-height:19px;color:#fff;transform:scaleX(0.9738);">34°C</span>
<span class="t" style="left:63.84px;top:1050.49px;font-size:14.5px;line-height:19px;color:#cdcdcd;transform:scaleX(1.0184);">Sunny</span>
<svg class="b" style="left:475px;top:1035.7px;" width="30" height="29" viewBox="0 0 30 29">
<defs><linearGradient id="wg" x1="0" y1="0" x2="1" y2="1"><stop offset="0" stop-color="#86dcff"/><stop offset="1" stop-color="#189af3"/></linearGradient></defs>
<rect x="0.3" y="0.3" width="13.6" height="13.4" rx=".8" fill="url(#wg)"/>
<rect x="15.4" y="0.3" width="13.6" height="13.4" rx=".8" fill="url(#wg)"/>
<rect x="0.3" y="15.2" width="13.6" height="13.4" rx=".8" fill="url(#wg)"/>
<rect x="15.4" y="15.2" width="13.6" height="13.4" rx=".8" fill="url(#wg)"/>
</svg>
<div class="b" style="left:521px;top:1030px;width:275.5px;height:39.5px;background:linear-gradient(90deg,#363d5e,#3c4160 60%,#3d4160);border:1px solid #50566f;border-radius:20px;"></div>
<svg class="b" style="left:534px;top:1039px;" width="22" height="22" viewBox="0 0 22 22">
<circle cx="9.6" cy="9.4" r="6.9" fill="none" stroke="#f2f2f2" stroke-width="1.7"/>
<path d="M14.6 14.6 L19.4 19.6" stroke="#f2f2f2" stroke-width="1.9" stroke-linecap="round"/>
</svg>
<span class="t" style="left:566.76px;top:1040.35px;font-size:17px;line-height:22px;color:#dfe1e8;transform:scaleX(0.9708);">Search</span>
<svg class="b" style="left:729px;top:1036px;" width="64" height="32" viewBox="0 0 64 32">
<path d="M3 27.4 C12 24.4 26 23.4 38 25.4 C34 30.4 18 31 3 27.4Z" fill="#35bfe0"/>
<path d="M25 11.6 L31.6 7 C34.4 9 34.4 14.6 31.6 16.6Z" fill="#f47c18"/>
<ellipse cx="15" cy="11.6" rx="11.6" ry="8.4" fill="#f68a1c"/>
<path d="M9 4.6 C11.4 8.6 11.4 14.6 9 18.6 L12.4 19.6 C14.8 14.8 14.8 8.6 12.4 3.6Z" fill="#fff" stroke="#5a3410" stroke-width=".5"/>
<path d="M17.6 3.6 C19.6 8.6 19.6 14.8 17.6 19.6 L20.8 18.4 C22.6 14.2 22.6 9 20.8 4.8Z" fill="#fff" stroke="#5a3410" stroke-width=".5"/>
<circle cx="29.8" cy="11.8" r="3" fill="#e8641a"/><circle cx="29.8" cy="11.8" r="1.6" fill="#f9a04a"/>
<circle cx="6.6" cy="9.6" r="1.2" fill="#1d1d1d"/>
<path d="M40 24 C39 18 41 13 44.6 9.6 C45 13.6 46 16 48 18 C47.6 13 49.6 8 53.4 6 C53 11 53.6 15 55 18.6 C56.4 15.4 58 13.4 60.4 12.4 C60.4 18 58.6 22 55.6 25Z" fill="#f38c3c"/>
<path d="M33.6 27.6 C32.6 21.6 36.6 17.6 41.6 18.6 C46 19.6 46.6 24 43.6 25.4 C47.6 28.4 53.6 27.4 55.6 23.4 C57.6 19.4 62.8 19.6 62.8 24 C62.8 29 57.6 31.6 50.6 31.6 H38.6 C35.6 31.6 34 30 33.6 27.6Z" fill="#9f8fe6"/>
<path d="M37 27 C36.6 23.6 39 21.6 41.4 22.2 M47 29.4 C51.6 30.4 56.6 28.6 58.6 25" fill="none" stroke="#6f5fc0" stroke-width="1"/>
<path d="M53 31.6 C54 27.6 58.6 26 62.8 27 V28 C62 30 60 31.6 57 31.6Z" fill="#ee93a8"/>
</svg>
<div class="b" style="left:811px;top:1043.5px;width:22.5px;height:20px;background:linear-gradient(135deg,#7a7a7a,#5a5a5a);border-radius:2px;"></div>
<div class="b" style="left:818.5px;top:1036px;width:23px;height:20px;background:linear-gradient(135deg,#ffffff,#d9d9d9);border-radius:2px;"></div>
<div class="b" style="left:818.5px;top:1043.5px;width:15px;height:12.5px;background:linear-gradient(135deg,#c8c8c8,#a9a9a9);"></div>
<svg class="b" style="left:865px;top:1034.5px;" width="30" height="30" viewBox="0 0 30 30">
<defs><linearGradient id="tg" x1="0" y1="0" x2="0" y2="1"><stop offset="0" stop-color="#9ea2ff"/><stop offset="1" stop-color="#5558d6"/></linearGradient></defs>
<circle cx="22.8" cy="8.4" r="3.6" fill="#8d90f5"/>
<path d="M17.5 13.5 H28 a1.6 1.6 0 0 1 1.6 1.6 V22 a5.6 5.6 0 0 1 -11.2 0Z" fill="#7679ea"/>
<circle cx="12.3" cy="5.6" r="4.8" fill="#a3a6ff"/>
<path d="M5.5 12 H19.5 a1.6 1.6 0 0 1 1.6 1.6 V22 a8.3 8.3 0 0 1 -16.6 0 V13Z" fill="url(#tg)"/>
<rect x="1" y="13.2" width="12.4" height="12.4" rx="2" fill="#4548c4"/>
<path d="M4.4 16.7 H10 M7.2 16.7 V22.8" stroke="#fff" stroke-width="1.7"/>
</svg>
<svg class="b" style="left:921px;top:1036.5px;" width="30" height="27" viewBox="0 0 30 27">
<defs>
<linearGradient id="cp1" x1="0" y1="0" x2="0" y2="1"><stop offset="0" stop-color="#1f8fe8"/><stop offset=".3" stop-color="#2bb8c0"/><stop offset=".55" stop-color="#7ad05a"/><stop offset=".78" stop-color="#f6d033"/><stop offset="1" stop-color="#f0643a"/></linearGradient>
<linearGradient id="cp2" x1="0" y1="0" x2="0" y2="1"><stop offset="0" stop-color="#2f7ff0"/><stop offset=".3" stop-color="#8a6cf0"/><stop offset=".6" stop-color="#e062c8"/><stop offset=".85" stop-color="#f2708a"/><stop offset="1" stop-color="#f79a4a"/></linearGradient>
</defs>
<path d="M13.2 25.4 C12.4 22.6 14.6 19.8 15.4 17 L17.6 9 C18.4 5.6 19.2 2.6 22.4 2.6 H24.6 C27.6 2.6 29.6 5 29 8.4 C28.4 12 27.6 16.4 26.2 20 C25 23.4 23.4 25.4 20.4 25.4Z" fill="url(#cp2)"/>
<path d="M17 1.4 C17.8 4.2 15.6 7 14.8 9.8 L12.6 17.8 C11.8 21.2 11 24.2 7.8 24.2 H6 C3 24.2 .6 21.8 1.2 18.4 C1.8 14.8 2.6 10.4 4 6.8 C5.2 3.4 6.8 1.4 9.8 1.4Z" fill="url(#cp1)"/>
<path d="M17 1.4 C17.8 4.2 15.6 7 14.8 9.8 L13.8 13.4 C15 10.4 16.6 8.6 19 8.2 C19.8 5 20.4 2.8 22.4 2.6 C21 1.6 19 1.4 17 1.4Z" fill="#1663c7" opacity=".55"/>
</svg>
<svg class="b" style="left:975.5px;top:1034px;" width="31" height="31" viewBox="0 0 31 31">
<defs>
<linearGradient id="eg1" x1="0" y1="0" x2="1" y2="0"><stop offset="0" stop-color="#1a8fe0"/><stop offset=".55" stop-color="#2ec3c8"/><stop offset="1" stop-color="#5fd44a"/></linearGradient>
<linearGradient id="eg2" x1="0" y1="0" x2="0" y2="1"><stop offset="0" stop-color="#1b74d0"/><stop offset="1" stop-color="#0d4f9c"/></linearGradient>
</defs>
<circle cx="15.5" cy="15.5" r="15" fill="url(#eg2)"/>
<path d="M.6 14.5 C1.2 6.6 7.6 .5 15.5 .5 C24 .5 30.5 7 30.5 14.4 C30.5 19.4 26.6 22 22.8 22 C19.6 22 17.6 20.6 17.6 19.2 C17.6 18.2 18.8 17.6 18.8 15.6 C18.8 12.6 15.8 10 12 10 C6.6 10 1.6 13.4 .6 14.5Z" fill="url(#eg1)"/>
<path d="M8 17.6 C8 23.6 12.6 28 18.6 28 C22.6 28 26 26.4 28.4 23.2 C24.4 25.8 19 24.6 16.2 21.4 C14.6 19.4 14.2 17 15.2 15 C12 13.4 8 14.4 8 17.6Z" fill="#12447f" opacity=".55"/>
<path d="M15 15.2 C14 17.6 14.8 20 16.6 21.8 C19.2 24.4 24.6 25.4 28.4 23.2 C26.4 21.6 22.4 22.6 19.6 21.2 C17.8 20.2 17.2 18.6 18 17.2Z" fill="#1b2030"/>
</svg>
<svg class="b" style="left:1030.5px;top:1035px;" width="30" height="30" viewBox="0 0 30 30">
<path d="M9.2 7.5 V3.4 a1.6 1.6 0 0 1 1.6 -1.6 H19.2 a1.6 1.6 0 0 1 1.6 1.6 V7.5" fill="none" stroke="#2aa8ec" stroke-width="2"/>
<path d="M.8 5.8 H29.2 V26.4 a3 3 0 0 1 -3 3 H3.8 a3 3 0 0 1 -3 -3Z" fill="#f4f4f4"/>
<path d="M.8 5.8 H29.2 V8 H.8Z" fill="#fff"/>
<rect x="9.6" y="11.8" width="5" height="5" fill="#f25022"/><rect x="15.6" y="11.8" width="5" height="5" fill="#7fba00"/>
<rect x="9.6" y="17.8" width="5" height="5" fill="#00a4ef"/><rect x="15.6" y="17.8" width="5" height="5" fill="#ffb900"/>
</svg>
<div class="b" style="left:1086px;top:1035.5px;width:30px;height:30px;border-radius:50%;background:#1e97d4;border:2px solid #f4f6f8;"></div>
<span class="t" style="left:1093.40px;top:1034.10px;font-size:25px;line-height:32px;color:#fff;font-weight:700;transform:scaleX(0.9804);">?</span>
<div class="b" style="left:1102.5px;top:1029px;width:19.7px;height:19.7px;border-radius:50%;background:#fdbd10;"></div>
<svg class="b" style="left:1141px;top:1035px;" width="30.3" height="30.3" viewBox="0 0 100 100">
<defs><clipPath id="cca"><circle cx="50" cy="50" r="50"/></clipPath></defs>
<g clip-path="url(#cca)">
<rect width="100" height="100" fill="#fbc116"/>
<path d="M50 50 L6.7 25 A50 50 0 0 1 93.3 25 Z M0 -10 H100 V25 H0Z" fill="#e33b2e"/>
<path d="M50 50 L6.7 25 L-10 25 L-10 110 L55 110 L28.3 62.5Z" fill="#2ba24c"/>
<path d="M50 50 L93.3 25 H50Z" fill="#e33b2e"/>
<path d="M50 50 L71.7 62.5 L50 100 L48 110 L110 110 L110 25 L50 25Z" fill="#fbc116"/>
<path d="M28.3 62.5 L50 100 L45 110 L-10 110 L-10 25 L6.7 25Z" fill="#2ba24c"/>
</g>
<circle cx="50" cy="50" r="23" fill="#fff"/>
<circle cx="50" cy="50" r="18" fill="#3f83f3"/>
</svg>
<svg class="b" style="left:1195.5px;top:1036px;" width="32" height="29" viewBox="0 0 32 29">
<defs><linearGradient id="fg" x1="0" y1="0" x2="0" y2="1"><stop offset="0" stop-color="#ffd95c"/><stop offset="1" stop-color="#f7b928"/></linearGradient></defs>
<path d="M.5 2.4 a1.6 1.6 0 0 1 1.6 -1.6 H10 l3 3 H.5Z" fill="#e8a317"/>
<path d="M.5 3.4 H29.6 a1.4 1.4 0 0 1 1.4 1.4 V26.2 a1.4 1.4 0 0 1 -1.4 1.4 H1.9 a1.4 1.4 0 0 1 -1.4 -1.4Z" fill="url(#fg)"/>
<path d="M5.4 27.6 V22 a2.2 2.2 0 0 1 2.2 -2.2 H23.8 a2.2 2.2 0 0 1 2.2 2.2 V27.6Z" fill="#1a86dd"/>
<rect x="9" y="22.6" width="13.4" height="1.7" rx=".8" fill="#0e5ea8"/>
</svg>
<div class="b" style="left:1251px;top:1035px;width:30.5px;height:30px;background:#1d1d20;"></div>
<svg class="b" style="left:1254px;top:1038px;" width="24" height="23" viewBox="0 0 24 23">
<defs><linearGradient id="ag" x1="0" y1="0" x2="0" y2="1"><stop offset="0" stop-color="#e9573f"/><stop offset=".22" stop-color="#c9c24e"/><stop offset=".4" stop-color="#4bb3a0"/><stop offset=".62" stop-color="#2f7fe6"/><stop offset="1" stop-color="#2b6fe0"/></linearGradient></defs>
<path d="M1 22 C5.6 19.6 8 12.6 9.8 5.6 C10.6 2.6 11.2 1 12 1 C12.8 1 13.4 2.6 14.2 5.6 C16 12.6 18.4 19.6 23 22 C20.4 22.6 17.8 21.6 16.4 19.6 C14.8 17.4 13.6 12.8 12 12.8 C10.4 12.8 9.2 17.4 7.6 19.6 C6.2 21.6 3.6 22.6 1 22Z" fill="url(#ag)"/>
</svg>
<svg class="b" style="left:1306px;top:1035px;" width="30.3" height="30.3" viewBox="0 0 100 100">
<defs><clipPath id="ccb"><circle cx="50" cy="50" r="50"/></clipPath></defs>
<g clip-path="url(#ccb)">
<rect width="100" height="100" fill="#fbc116"/>
<path d="M50 50 L6.7 25 A50 50 0 0 1 93.3 25 Z M0 -10 H100 V25 H0Z" fill="#e33b2e"/>
<path d="M50 50 L6.7 25 L-10 25 L-10 110 L55 110 L28.3 62.5Z" fill="#2ba24c"/>
<path d="M50 50 L93.3 25 H50Z" fill="#e33b2e"/>
<path d="M50 50 L71.7 62.5 L50 100 L48 110 L110 110 L110 25 L50 25Z" fill="#fbc116"/>
<path d="M28.3 62.5 L50 100 L45 110 L-10 110 L-10 25 L6.7 25Z" fill="#2ba24c"/>
</g>
<circle cx="50" cy="50" r="23" fill="#fff"/>
<circle cx="50" cy="50" r="18" fill="#3f83f3"/>
</svg>
<div class="b" style="left:1321.5px;top:1029px;width:20.6px;height:20.6px;border-radius:50%;background:#c2185e;"></div>
<span class="t" style="left:1327.07px;top:1031.73px;font-size:12px;line-height:16px;color:#f7d6e4;font-weight:700;transform:scaleX(1.0945);">A</span>
<svg class="b" style="left:1360px;top:1034.5px;" width="32" height="32" viewBox="0 0 32 32">
<path d="M16 2.2 A13.4 13.4 0 1 1 9.3 27.2 L2.2 29.4 L4.5 22.5 A13.4 13.4 0 0 1 16 2.2Z" fill="none" stroke="#27d366" stroke-width="3.2" stroke-linejoin="round"/>
<path d="M11.2 8.6 C10.2 8.6 8.8 10 8.8 12 C8.8 16.6 15 22.8 19.8 22.8 C21.8 22.8 23.2 21.4 23.2 20.4 C23.2 19.8 20.4 18.2 19.8 18.2 C19.2 18.2 18.6 19.6 18 19.6 C16.4 19.6 12.2 15.6 12.2 14 C12.2 13.4 13.4 12.8 13.4 12.2 C13.4 11.6 12 8.6 11.2 8.6Z" fill="#27d366"/>
</svg>
<div class="b" style="left:1377px;top:1029px;width:20px;height:20px;border-radius:50%;background:#6fcbd9;"></div>
<span class="t" style="left:1383.00px;top:1030.77px;font-size:13px;line-height:17px;color:#13272c;transform:scaleX(1.0000);">1</span>
<svg class="b" style="left:1415px;top:1035.5px;" width="28" height="29" viewBox="0 0 28 29">
<defs><clipPath id="xlc2"><rect x="5" y=".8" width="22" height="27.4" rx="3.4"/></clipPath></defs>
<g clip-path="url(#xlc2)">
<rect x="5" y=".8" width="11" height="9" fill="#55bf60"/>
<rect x="16" y=".8" width="11" height="9" fill="#a4e38c"/>
<rect x="5" y="9.8" width="11" height="9.2" fill="#2f9b50"/>
<rect x="16" y="9.8" width="11" height="9.2" fill="#1f7c41"/>
<rect x="5" y="19" width="22" height="9.4" fill="#165f39"/>
</g>
<rect x=".8" y="11.2" width="14.4" height="14.6" rx="2.2" fill="#0e5c33"/>
<path d="M5 15 L11 22 M11 15 L5 22" stroke="#fff" stroke-width="1.9"/>
</svg>
<div class="b" style="left:1207px;top:1070.2px;width:8.2px;height:3.4px;background:#8d8f97;border-radius:1.7px;"></div>
<div class="b" style="left:1262px;top:1070.2px;width:8.2px;height:3.4px;background:#8d8f97;border-radius:1.7px;"></div>
<div class="b" style="left:1316.8px;top:1070.2px;width:8.2px;height:3.4px;background:#8d8f97;border-radius:1.7px;"></div>
<div class="b" style="left:1372px;top:1070.2px;width:8.2px;height:3.4px;background:#8d8f97;border-radius:1.7px;"></div>
<div class="b" style="left:1427px;top:1070.2px;width:8.2px;height:3.4px;background:#8d8f97;border-radius:1.7px;"></div>
<svg class="b" style="left:1620px;top:1043px;" width="17" height="12" viewBox="0 0 17 12"><path d="M2 9.6 L8.4 3 L14.8 9.6" fill="none" stroke="#f2f2f2" stroke-width="1.6" stroke-linecap="round" stroke-linejoin="round"/></svg>
<span class="t" style="left:1660.66px;top:1031.99px;font-size:14.5px;line-height:19px;color:#fff;transform:scaleX(0.9789);">ENG</span>
<span class="t" style="left:1667.24px;top:1051.99px;font-size:14.5px;line-height:19px;color:#fff;transform:scaleX(1.1965);">IN</span>
<svg class="b" style="left:1712px;top:1041px;" width="22" height="19" viewBox="0 0 22 19">
<path d="M1.4 6.8 A13.6 13.6 0 0 1 20.6 6.8" fill="none" stroke="#f2f2f2" stroke-width="1.5" stroke-linecap="round"/>
<path d="M4.6 10.2 A9.2 9.2 0 0 1 17.4 10.2" fill="none" stroke="#f2f2f2" stroke-width="1.5" stroke-linecap="round"/>
<path d="M7.6 13.4 A5 5 0 0 1 14.4 13.4" fill="none" stroke="#f2f2f2" stroke-width="1.5" stroke-linecap="round"/>
<circle cx="11" cy="16.4" r="1.4" fill="#f2f2f2"/>
</svg>
<svg class="b" style="left:1742px;top:1041px;" width="23" height="19" viewBox="0 0 23 19">
<path d="M1.4 7 H5 L9.4 2.8 V16.2 L5 12 H1.4Z" fill="none" stroke="#f2f2f2" stroke-width="1.3" stroke-linejoin="round"/>
<path d="M12.2 6.4 A4.4 4.4 0 0 1 12.2 12.6" fill="none" stroke="#f2f2f2" stroke-width="1.3" stroke-linecap="round"/>
<path d="M14.8 4 A7.8 7.8 0 0 1 14.8 15" fill="none" stroke="#f2f2f2" stroke-width="1.3" stroke-linecap="round"/>
<path d="M17.4 1.8 A11 11 0 0 1 17.4 17.2" fill="none" stroke="#f2f2f2" stroke-width="1.3" stroke-linecap="round"/>
</svg>
<svg class="b" style="left:1772px;top:1043px;" width="28" height="15" viewBox="0 0 28 15">
<rect x="1.2" y="1.6" width="21.6" height="11.8" rx="3.4" fill="none" stroke="#f2f2f2" stroke-width="1.4"/>
<rect x="3.6" y="4" width="15.4" height="7" rx="1.6" fill="#f2f2f2"/>
<path d="M24.6 5.4 V9.6" stroke="#f2f2f2" stroke-width="1.6" stroke-linecap="round"/>
</svg>
<span class="t" style="left:1859.42px;top:1030.99px;font-size:14.5px;line-height:19px;color:#fff;transform:scaleX(0.9976);">16:56</span>
<span class="t" style="left:1818.40px;top:1050.99px;font-size:14.5px;line-height:19px;color:#fff;transform:scaleX(1.0410);">07-04-2026</span>
</body></html>
